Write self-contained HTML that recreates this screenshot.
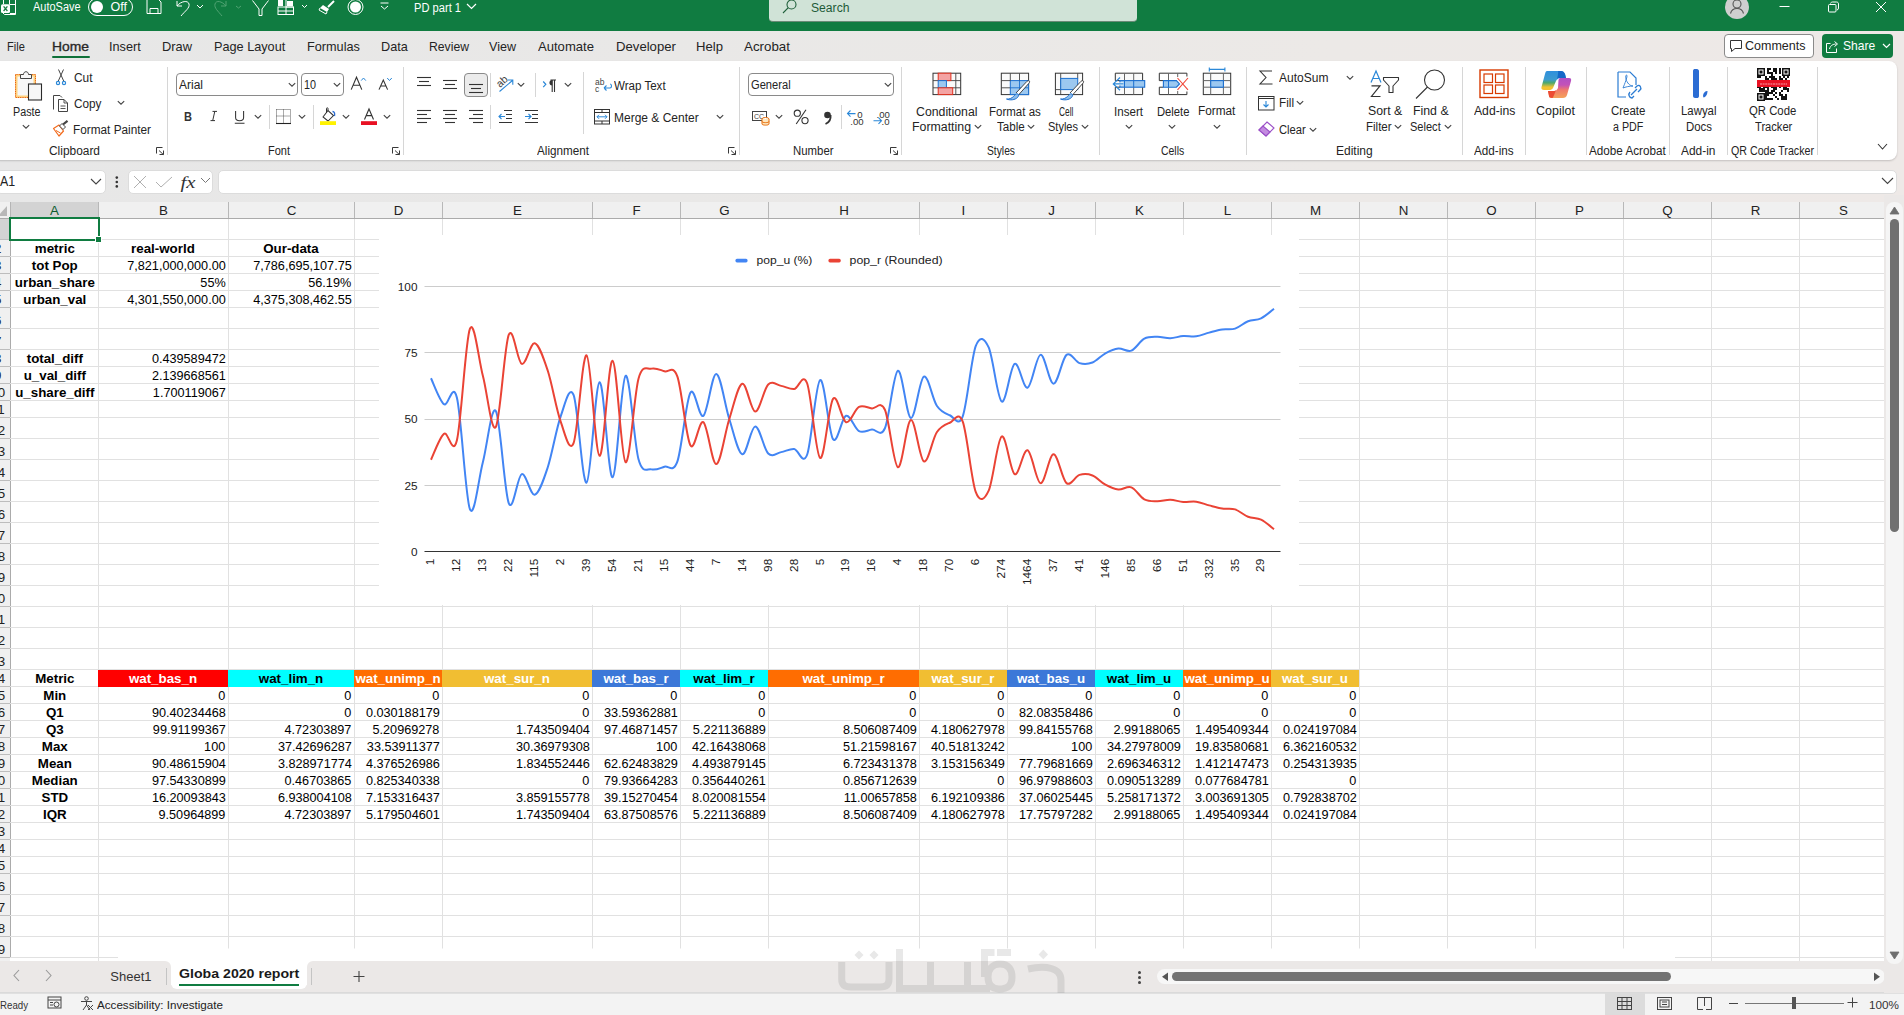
<!DOCTYPE html>
<html><head><meta charset="utf-8"><title>Excel</title>
<style>
*{box-sizing:border-box;margin:0;padding:0}
html,body{width:1904px;height:1015px;overflow:hidden;background:#fff;font-family:"Liberation Sans", sans-serif;color:#000}
.a{position:absolute;white-space:nowrap}
.rt{font-size:12px;color:#242424}
.c{position:absolute;font-size:13.33px;line-height:15px;white-space:nowrap;overflow:visible}
.b{font-weight:bold}
.ctr{text-align:center}
.rgt{text-align:right}
svg{position:absolute;overflow:visible}
</style></head><body>
<div class="a" style="left:0;top:31px;width:1904px;height:171px;background:linear-gradient(90deg,#E7E7E7 0%,#E9E8E7 35%,#ECE9E7 70%,#EEE9E7 100%)"></div>
<div class="a" style="left:7.4px;top:39.6px;font-size:12.7px;line-height:15px;color:#242424;transform:scaleX(0.8698);transform-origin:0 0;">File</div>
<div class="a" style="left:52.0px;top:39.6px;font-size:12.7px;line-height:15px;color:#222;transform:scaleX(1.0922);transform-origin:0 0;-webkit-text-stroke:0.35px #333;">Home</div>
<div class="a" style="left:109.0px;top:39.6px;font-size:12.7px;line-height:15px;color:#242424;">Insert</div>
<div class="a" style="left:162.0px;top:39.6px;font-size:12.7px;line-height:15px;color:#242424;transform:scaleX(1.0123);transform-origin:0 0;">Draw</div>
<div class="a" style="left:214.0px;top:39.6px;font-size:12.7px;line-height:15px;color:#242424;">Page Layout</div>
<div class="a" style="left:307.0px;top:39.6px;font-size:12.7px;line-height:15px;color:#242424;">Formulas</div>
<div class="a" style="left:381.0px;top:39.6px;font-size:12.7px;line-height:15px;color:#242424;">Data</div>
<div class="a" style="left:429.0px;top:39.6px;font-size:12.7px;line-height:15px;color:#242424;transform:scaleX(0.9606);transform-origin:0 0;">Review</div>
<div class="a" style="left:489.0px;top:39.6px;font-size:12.7px;line-height:15px;color:#242424;transform:scaleX(0.9891);transform-origin:0 0;">View</div>
<div class="a" style="left:538.0px;top:39.6px;font-size:12.7px;line-height:15px;color:#242424;transform:scaleX(1.0302);transform-origin:0 0;">Automate</div>
<div class="a" style="left:616.0px;top:39.6px;font-size:12.7px;line-height:15px;color:#242424;transform:scaleX(1.0365);transform-origin:0 0;">Developer</div>
<div class="a" style="left:696.0px;top:39.6px;font-size:12.7px;line-height:15px;color:#242424;transform:scaleX(1.0337);transform-origin:0 0;">Help</div>
<div class="a" style="left:744.0px;top:39.6px;font-size:12.7px;line-height:15px;color:#242424;transform:scaleX(1.0510);transform-origin:0 0;">Acrobat</div>
<div class="a" style="left:52px;top:56px;width:38px;height:2px;background:#0F7139;border-radius:1px"></div>
<div class="a" style="left:1724px;top:34px;width:90px;height:24px;border:1px solid #8a8a8a;border-radius:4px;background:#fff"></div>
<svg style="left:1730px;top:40px" width="12" height="13" viewBox="0 0 12 13"><path d="M0.5 0.5H11.5V8.5H5L1.5 11.5V8.5H0.5Z" fill="none" stroke="#333"/></svg>
<div class="a" style="left:1745.4px;top:39.4px;font-size:12.7px;line-height:15px;color:#242424;transform:scaleX(0.9870);transform-origin:0 0;">Comments</div>
<div class="a" style="left:1822px;top:34px;width:71px;height:24px;background:#107C41;border-radius:4px"></div>
<svg style="left:1826px;top:40px" width="13" height="13" viewBox="0 0 13 13"><path d="M4.5 3.5H0.5V12.5H10.5V8.5" fill="none" stroke="#fff"/><path d="M3.5 9C4.5 5 7.5 4 10.5 4M8.5 1.5L11.5 4L8.5 6.5" fill="none" stroke="#fff"/></svg>
<div class="a" style="left:1842.8px;top:39.4px;font-size:12.7px;line-height:15px;color:#fff;transform:scaleX(0.9501);transform-origin:0 0;">Share</div>
<svg style="left:1882px;top:43px" width="9" height="6" viewBox="0 0 9 6"><path d="M1 1L4.5 4.5L8 1" fill="none" stroke="#fff" stroke-width="1.2"/></svg><div class="a" style="left:0;top:0;width:1904px;height:31px;background:#107C41"></div>
<svg style="left:0;top:0" width="18" height="17" viewBox="0 0 18 17"><path d="M3.5 -1V4M9.5 -1V4.5H15.5M15.5 -1V14.5H4.5L3 13" fill="none" stroke="#fff" stroke-width="1"/><path d="M10 13.5H15.5" stroke="#fff"/>
<rect x="1" y="4.2" width="9" height="8.8" rx="1.6" fill="#fff"/><path d="M3.6 6.3L7.4 11M7.4 6.3L3.6 11" stroke="#1D7F45" stroke-width="1.3"/></svg>
<div class="a" style="left:33.0px;top:0.4px;font-size:12.5px;line-height:15px;color:#fff;transform:scaleX(0.8781);transform-origin:0 0;">AutoSave</div>
<div class="a" style="left:88px;top:-2px;width:45px;height:18px;border:1px solid #fff;border-radius:9px"></div>
<div class="a" style="left:91px;top:1px;width:12px;height:12px;background:#fff;border-radius:6px"></div>
<div class="a" style="left:110.5px;top:0.4px;font-size:12.5px;line-height:15px;color:#fff;">Off</div>
<svg style="left:146px;top:0" width="16" height="15" viewBox="0 0 16 15"><path d="M1 -2V13.5H15V2L11 -2" fill="none" stroke="#fff"/><path d="M4 13.5V8.5H12V13.5" fill="none" stroke="#fff"/></svg>
<svg style="left:175px;top:0" width="40" height="18" viewBox="0 0 40 18"><path d="M2 1L2 6L7 6" fill="none" stroke="#fff"/><path d="M2 6C6 1 13 0 14 4C15 8 10 11 6 16" fill="none" stroke="#fff"/><path d="M22 5L25 8L28 5" fill="none" stroke="#fff"/></svg>
<svg style="left:214px;top:0" width="40" height="18" viewBox="0 0 40 18" opacity="0.45"><path d="M12 1L12 6L7 6" fill="none" stroke="#9fd3b0"/><path d="M12 6C8 1 2 0 1 4C0 8 4 11 8 16" fill="none" stroke="#9fd3b0"/><path d="M22 6L24.5 8L27 6" fill="none" stroke="#9fd3b0"/></svg>
<svg style="left:252px;top:0" width="18" height="18" viewBox="0 0 18 18"><path d="M0.5 0.5L7 9V15.5H10V9L16.5 0.5" fill="none" stroke="#fff"/></svg>
<svg style="left:277px;top:0" width="36" height="16" viewBox="0 0 36 16"><rect x="1" y="0" width="5" height="6" fill="#fff"/><rect x="1" y="7" width="15.5" height="7.5" fill="none" stroke="#fff"/><path d="M9 7V14.5M1 11H16.5M9 0V7H16.5" stroke="#fff" fill="none"/><rect x="10" y="1" width="6" height="5" fill="#fff"/><path d="M25 5L27.5 7.5L30 5" fill="none" stroke="#fff"/></svg>
<svg style="left:318px;top:0" width="18" height="16" viewBox="0 0 18 16"><path d="M2 8L9 12L11 9L5 5Z" fill="#fff"/><path d="M10 7L16 1" stroke="#fff" stroke-width="2"/><path d="M2 8L1 10L8 14L9 12" fill="none" stroke="#fff"/></svg>
<svg style="left:347px;top:0" width="18" height="18" viewBox="0 0 18 18"><circle cx="8.5" cy="7" r="7.5" fill="none" stroke="#fff"/><circle cx="8.5" cy="7" r="5.5" fill="#fff"/></svg>
<svg style="left:380px;top:0" width="10" height="12" viewBox="0 0 10 12"><path d="M0.5 3H8.5" stroke="#fff"/><path d="M1 6L4.5 9L8 6" fill="none" stroke="#fff"/></svg>
<div class="a" style="left:414.0px;top:0.6px;font-size:12.5px;line-height:15px;color:#fff;transform:scaleX(0.8901);transform-origin:0 0;">PD part 1</div>
<svg style="left:466px;top:0" width="12" height="12" viewBox="0 0 12 12"><path d="M1 4L5.5 8.5L10 4" fill="none" stroke="#fff" stroke-width="1.2"/></svg>
<div class="a" style="left:769px;top:-4px;width:368px;height:26px;background:#D0E3D7;border-radius:4px;border-bottom:1px solid #6a8a76"></div>
<svg style="left:782px;top:0" width="16" height="14" viewBox="0 0 16 14"><circle cx="9.5" cy="4.5" r="4.5" fill="none" stroke="#1f5f3a" stroke-width="1.1"/><path d="M6.3 7.7L1 13" stroke="#1f5f3a" stroke-width="1.1"/></svg>
<div class="a" style="left:811.0px;top:0.6px;font-size:12.5px;line-height:15px;color:#1E5B37;transform:scaleX(0.9721);transform-origin:0 0;">Search</div>
<svg style="left:1724px;top:-6px" width="26" height="26" viewBox="0 0 26 26"><circle cx="13" cy="13" r="12" fill="#CFCFCF"/><circle cx="13" cy="10" r="4" fill="none" stroke="#555" stroke-width="1.1"/><path d="M6.5 19.5C7.5 15.5 10 14.5 13 14.5C16 14.5 18.5 15.5 19.5 19.5" fill="none" stroke="#555" stroke-width="1.1"/></svg>
<svg style="left:1779px;top:0" width="12" height="12" viewBox="0 0 12 12"><path d="M0.5 6.5H10.5" stroke="#fff"/></svg>
<svg style="left:1827px;top:1px" width="14" height="14" viewBox="0 0 14 14"><rect x="1.5" y="3.5" width="7.5" height="7.5" rx="1" fill="none" stroke="#fff"/><path d="M3.5 2.5C3.8 1.5 4.5 1 5.5 1H9.5C10.8 1 11.5 1.7 11.5 3V7C11.5 8 11 8.8 10 9" fill="none" stroke="#fff"/></svg>
<svg style="left:1875px;top:1px" width="14" height="14" viewBox="0 0 14 14"><path d="M1 1L11 11M11 1L1 11" stroke="#fff" stroke-width="1"/></svg><div class="a" style="left:-8px;top:61px;width:1905px;height:99px;background:#fff;border-radius:8px;box-shadow:0 1px 2px rgba(0,0,0,0.18)"></div>
<svg style="left:14px;top:69px" width="30" height="32" viewBox="0 0 30 32" ><rect x="1.5" y="5.5" width="20" height="23" fill="#FFD27F" stroke="#E8650A" stroke-width="1" stroke-dasharray="1.2 0.6"/><rect x="3.5" y="7.5" width="16" height="19" fill="#F7F7F7"/>
<path d="M6.5 9.5V5.5H9.5C9.5 1.8 14.5 1.8 14.5 5.5H17.5V9.5Z" fill="#F7F7F7" stroke="#444" stroke-width="1"/>
<rect x="14.5" y="15" width="13" height="16" fill="#F7F7F7" stroke="#2a2a2a" stroke-width="1.1"/></svg>
<div class="a" style="left:12.5px;top:104.6px;font-size:12.5px;line-height:15px;color:#242424;transform:scaleX(0.8603);transform-origin:0 0;">Paste</div>
<svg style="left:21.5px;top:124px" width="8" height="6" viewBox="0 0 8 6" ><path d="M0.8 1.2L4 4.2L7.2 1.2" fill="none" stroke="#424242" stroke-width="1.1"/></svg>
<svg style="left:55px;top:68px" width="14" height="18" viewBox="0 0 14 18" ><path d="M3.5 1.5L8.7 13M8.5 1.5L3.3 13" stroke="#444" stroke-width="1"/><circle cx="3" cy="15" r="1.6" fill="#fff" stroke="#2B88D8" stroke-width="1.2"/><circle cx="9" cy="15" r="1.6" fill="#fff" stroke="#2B88D8" stroke-width="1.2"/></svg>
<div class="a" style="left:73.5px;top:70.6px;font-size:12.5px;line-height:15px;color:#242424;transform:scaleX(0.9511);transform-origin:0 0;">Cut</div>
<svg style="left:53px;top:95px" width="16" height="17" viewBox="0 0 16 17" ><path d="M0.5 14.5V0.5H7L9 2.5" fill="none" stroke="#444"/><path d="M5.5 4.5H11L14.5 8V16.5H5.5Z" fill="#fff" stroke="#444"/><path d="M11 4.5V8H14.5M7.5 11H12.5M7.5 13.5H12.5" fill="none" stroke="#444" stroke-width="0.9"/></svg>
<div class="a" style="left:73.5px;top:97.1px;font-size:12.5px;line-height:15px;color:#242424;transform:scaleX(0.9424);transform-origin:0 0;">Copy</div>
<svg style="left:117px;top:100px" width="8" height="6" viewBox="0 0 8 6" ><path d="M0.8 1.2L4 4.2L7.2 1.2" fill="none" stroke="#424242" stroke-width="1.1"/></svg>
<svg style="left:52px;top:120px" width="17" height="17" viewBox="0 0 17 17" ><path d="M1.5 8.5L7 5L11.5 11L7 16Z" fill="#fff" stroke="#F26B1D" stroke-width="1.2" stroke-linejoin="round"/><path d="M4 10.5L8.5 13" stroke="#F26B1D" stroke-width="1"/><path d="M7.5 6L10 3.5L13.5 7L11 9.5Z" fill="#fff" stroke="#444" stroke-width="1"/><path d="M11 4.5L15.5 0.8" stroke="#444" stroke-width="2.2"/></svg>
<div class="a" style="left:73.0px;top:122.6px;font-size:12.5px;line-height:15px;color:#242424;transform:scaleX(0.9435);transform-origin:0 0;">Format Painter</div>
<div class="a" style="left:49.0px;top:144.1px;font-size:12.5px;line-height:15px;color:#242424;transform:scaleX(0.9532);transform-origin:0 0;">Clipboard</div>
<svg style="left:156px;top:147px" width="9" height="9" viewBox="0 0 9 9" ><path d="M0.5 6.5V0.5H6.5" fill="none" stroke="#222" stroke-width="0.9"/><path d="M3 3.5L7.3 7.5M7.5 3.5V7.5H3.5" fill="none" stroke="#222" stroke-width="0.9"/></svg>
<div class="a" style="left:167px;top:67px;width:1px;height:88px;background:#D6D6D6"></div>
<div class="a" style="left:176px;top:73px;width:122px;height:23px;border:1px solid #8A8A8A;border-radius:4px;background:#fff"></div>
<div class="a" style="left:179.0px;top:78.1px;font-size:12.5px;line-height:15px;color:#242424;transform:scaleX(0.9598);transform-origin:0 0;">Arial</div>
<svg style="left:287.5px;top:82px" width="8" height="6" viewBox="0 0 8 6" ><path d="M0.8 1.2L4 4.2L7.2 1.2" fill="none" stroke="#424242" stroke-width="1.1"/></svg>
<div class="a" style="left:301px;top:73px;width:43px;height:23px;border:1px solid #8A8A8A;border-radius:4px;background:#fff"></div>
<div class="a" style="left:304.0px;top:78.1px;font-size:12.5px;line-height:15px;color:#242424;transform:scaleX(0.8631);transform-origin:0 0;">10</div>
<svg style="left:333px;top:82px" width="8" height="6" viewBox="0 0 8 6" ><path d="M0.8 1.2L4 4.2L7.2 1.2" fill="none" stroke="#424242" stroke-width="1.1"/></svg>
<svg style="left:0px;top:0px" width="1" height="1" viewBox="0 0 1 1" ></svg>
<svg style="left:345px;top:70px" width="60" height="25" viewBox="0 0 60 25" ><path d="M6.2 19.6L11.5 7.2L16.8 19.6M8.2 15.2H14.8" fill="none" stroke="#333" stroke-width="1.1"/><path d="M16.2 10.6L18.5 8L20.8 10.6" fill="none" stroke="#2B88D8" stroke-width="1"/><path d="M34 19.6L38.3 10L42.6 19.6M35.6 16H41" fill="none" stroke="#333" stroke-width="1.1"/><path d="M42.2 8L44.5 10.5L46.8 8" fill="none" stroke="#2B88D8" stroke-width="1"/></svg>
<svg style="left:180px;top:106px" width="70" height="20" viewBox="0 0 70 20" ><text x="4" y="14.6" font-family="Liberation Sans" font-weight="bold" font-size="12.8" fill="#333" textLength="8" lengthAdjust="spacingAndGlyphs">B</text><path d="M32.5 5.4H37M30.5 14.6H35M34.8 5.4L32.7 14.6" fill="none" stroke="#333" stroke-width="1"/><path d="M55.6 5V11.5C55.6 13.6 57 14.8 59.6 14.8C62.2 14.8 63.6 13.6 63.6 11.5V5M54.8 17.2H64.5" fill="none" stroke="#333" stroke-width="1.05"/></svg>
<svg style="left:254px;top:114px" width="8" height="6" viewBox="0 0 8 6" ><path d="M0.8 1.2L4 4.2L7.2 1.2" fill="none" stroke="#424242" stroke-width="1.1"/></svg>
<div class="a" style="left:269px;top:105px;width:1px;height:24px;background:#D6D6D6"></div>
<svg style="left:275px;top:108px" width="18" height="17" viewBox="0 0 18 17" ><path d="M1.5 1.5H15.5M1.5 1.5V14.5M15.5 1.5V14.5M8.5 1.5V14.5M1.5 8H15.5" fill="none" stroke="#444" stroke-width="0.9" stroke-dasharray="1 1"/><path d="M1 15.5H16" stroke="#222" stroke-width="1.1"/></svg>
<svg style="left:298px;top:114px" width="8" height="6" viewBox="0 0 8 6" ><path d="M0.8 1.2L4 4.2L7.2 1.2" fill="none" stroke="#424242" stroke-width="1.1"/></svg>
<div class="a" style="left:313px;top:105px;width:1px;height:24px;background:#D6D6D6"></div>
<svg style="left:319px;top:107px" width="19" height="19" viewBox="0 0 19 19" ><path d="M4 10L9 3.5L14.5 8.5L9 14Z" fill="none" stroke="#333" stroke-width="1.05"/><path d="M9 3.5V1.5C9 0.5 7.5 0.5 7.5 1.5V6" fill="none" stroke="#333" stroke-width="1"/><path d="M13.5 4.5C15.5 4.5 16 6.5 15.5 9" fill="none" stroke="#2B6CD3" stroke-width="1.3"/><rect x="1" y="14.2" width="16" height="3.8" fill="#FFF200"/></svg>
<svg style="left:342px;top:114px" width="8" height="6" viewBox="0 0 8 6" ><path d="M0.8 1.2L4 4.2L7.2 1.2" fill="none" stroke="#424242" stroke-width="1.1"/></svg>
<svg style="left:360px;top:107px" width="19" height="19" viewBox="0 0 19 19" ><path d="M4.5 12.5L9 2L13.5 12.5M6.2 8.6H11.8" fill="none" stroke="#333" stroke-width="1.1"/><rect x="1" y="14.2" width="16" height="3.8" fill="#E81123"/></svg>
<svg style="left:383px;top:114px" width="8" height="6" viewBox="0 0 8 6" ><path d="M0.8 1.2L4 4.2L7.2 1.2" fill="none" stroke="#424242" stroke-width="1.1"/></svg>
<div class="a" style="left:268.0px;top:144.1px;font-size:12.5px;line-height:15px;color:#242424;transform:scaleX(0.8796);transform-origin:0 0;">Font</div>
<svg style="left:392px;top:147px" width="9" height="9" viewBox="0 0 9 9" ><path d="M0.5 6.5V0.5H6.5" fill="none" stroke="#222" stroke-width="0.9"/><path d="M3 3.5L7.3 7.5M7.5 3.5V7.5H3.5" fill="none" stroke="#222" stroke-width="0.9"/></svg>
<div class="a" style="left:403px;top:67px;width:1px;height:88px;background:#D6D6D6"></div>
<svg style="left:417px;top:77px" width="14" height="10" viewBox="0 0 14 10" ><path d="M0.0 0.5H14.0" stroke="#333" stroke-width="1.1"/><path d="M2.0 4.5H12.0" stroke="#333" stroke-width="1.1"/><path d="M0.0 8.5H14.0" stroke="#333" stroke-width="1.1"/></svg>
<svg style="left:443px;top:80px" width="14" height="10" viewBox="0 0 14 10" ><path d="M0.0 0.5H14.0" stroke="#333" stroke-width="1.1"/><path d="M2.0 4.5H12.0" stroke="#333" stroke-width="1.1"/><path d="M0.0 8.5H14.0" stroke="#333" stroke-width="1.1"/></svg>
<div class="a" style="left:464px;top:73px;width:24px;height:24px;border:1px solid #8A8A8A;border-radius:4px;background:#EBEBEB"></div>
<svg style="left:469px;top:84px" width="14" height="10" viewBox="0 0 14 10" ><path d="M0.0 0.5H14.0" stroke="#333" stroke-width="1.1"/><path d="M2.0 4.5H12.0" stroke="#333" stroke-width="1.1"/><path d="M0.0 8.5H14.0" stroke="#333" stroke-width="1.1"/></svg>
<div class="a" style="left:490px;top:73px;width:1px;height:24px;background:#D6D6D6"></div>
<svg style="left:496px;top:75px" width="19" height="19" viewBox="0 0 19 19" ><text x="0.5" y="10" font-family="Liberation Sans" font-size="10.5" fill="#444" transform="rotate(-42 6 7)">ab</text><path d="M3.5 16.5L16.5 5.5M12 5H16.8V9.8" fill="none" stroke="#2B88D8" stroke-width="1.1"/></svg>
<svg style="left:517px;top:82px" width="8" height="6" viewBox="0 0 8 6" ><path d="M0.8 1.2L4 4.2L7.2 1.2" fill="none" stroke="#424242" stroke-width="1.1"/></svg>
<div class="a" style="left:535px;top:73px;width:1px;height:24px;background:#D6D6D6"></div>
<svg style="left:542px;top:79px" width="16" height="14" viewBox="0 0 16 14" ><path d="M1.2 2.5L3.8 5.3L1.2 8.1" fill="none" stroke="#2B88D8" stroke-width="1.2"/><path d="M8.5 1H14M10.2 1V13M12.5 1V13" stroke="#333" stroke-width="1.1"/><path d="M10.2 1C6.5 1 6.5 6.5 10.2 6.5Z" fill="#333"/></svg>
<svg style="left:564px;top:82px" width="8" height="6" viewBox="0 0 8 6" ><path d="M0.8 1.2L4 4.2L7.2 1.2" fill="none" stroke="#424242" stroke-width="1.1"/></svg>
<svg style="left:417px;top:110px" width="14" height="14" viewBox="0 0 14 14" ><path d="M0 0.5H14" stroke="#333" stroke-width="1.1"/><path d="M0 4.5H10" stroke="#333" stroke-width="1.1"/><path d="M0 8.5H14" stroke="#333" stroke-width="1.1"/><path d="M0 12.5H10" stroke="#333" stroke-width="1.1"/></svg>
<svg style="left:443px;top:110px" width="14" height="14" viewBox="0 0 14 14" ><path d="M0.0 0.5H14.0" stroke="#333" stroke-width="1.1"/><path d="M2.0 4.5H12.0" stroke="#333" stroke-width="1.1"/><path d="M0.0 8.5H14.0" stroke="#333" stroke-width="1.1"/><path d="M2.0 12.5H12.0" stroke="#333" stroke-width="1.1"/></svg>
<svg style="left:469px;top:110px" width="14" height="14" viewBox="0 0 14 14" ><path d="M0 0.5H14" stroke="#333" stroke-width="1.1"/><path d="M4 4.5H14" stroke="#333" stroke-width="1.1"/><path d="M0 8.5H14" stroke="#333" stroke-width="1.1"/><path d="M4 12.5H14" stroke="#333" stroke-width="1.1"/></svg>
<div class="a" style="left:490px;top:105px;width:1px;height:24px;background:#D6D6D6"></div>
<svg style="left:498px;top:110px" width="15" height="14" viewBox="0 0 15 14" ><path d="M6 0.5H14M8 4.5H14M8 8.5H14M1 12.5H14" stroke="#333" stroke-width="1.1"/><path d="M1 6.5H7M3.5 4L1 6.5L3.5 9" fill="none" stroke="#2B88D8" stroke-width="1.1"/></svg>
<svg style="left:524px;top:110px" width="15" height="14" viewBox="0 0 15 14" ><path d="M1 0.5H14M8 4.5H14M8 8.5H14M1 12.5H14" stroke="#333" stroke-width="1.1"/><path d="M1 6.5H7M4.5 4L7 6.5L4.5 9" fill="none" stroke="#2B88D8" stroke-width="1.1"/></svg>
<div class="a" style="left:583px;top:72px;width:1px;height:62px;background:#D6D6D6"></div>
<svg style="left:595px;top:77px" width="17" height="17" viewBox="0 0 17 17" ><text x="0" y="7.5" font-family="Liberation Sans" font-size="8.5" fill="#444">ab</text><text x="0" y="15" font-family="Liberation Sans" font-size="8.5" fill="#444">c</text><path d="M9 11L15 11C17 11 17 7 15 7M9 11L11.5 8.5M9 11L11.5 13.5" fill="none" stroke="#2B88D8" stroke-width="1.1"/></svg>
<div class="a" style="left:614.0px;top:78.8px;font-size:12.5px;line-height:15px;color:#242424;transform:scaleX(0.9246);transform-origin:0 0;">Wrap Text</div>
<svg style="left:594px;top:109px" width="16" height="16" viewBox="0 0 16 16" ><rect x="0.5" y="0.5" width="15" height="14.5" fill="none" stroke="#333"/><path d="M0.5 3.5H15.5M0.5 12H15.5M8 0.5V3.5M8 12V15" stroke="#333"/><path d="M3 7.8H13M5 5.8L3 7.8L5 9.8M11 5.8L13 7.8L11 9.8" fill="none" stroke="#2B88D8" stroke-width="1"/></svg>
<div class="a" style="left:614.0px;top:111.1px;font-size:12.5px;line-height:15px;color:#242424;transform:scaleX(0.9600);transform-origin:0 0;">Merge &amp; Center</div>
<svg style="left:715.5px;top:114px" width="8" height="6" viewBox="0 0 8 6" ><path d="M0.8 1.2L4 4.2L7.2 1.2" fill="none" stroke="#424242" stroke-width="1.1"/></svg>
<div class="a" style="left:537.0px;top:144.1px;font-size:12.5px;line-height:15px;color:#242424;transform:scaleX(0.9355);transform-origin:0 0;">Alignment</div>
<svg style="left:728px;top:147px" width="9" height="9" viewBox="0 0 9 9" ><path d="M0.5 6.5V0.5H6.5" fill="none" stroke="#222" stroke-width="0.9"/><path d="M3 3.5L7.3 7.5M7.5 3.5V7.5H3.5" fill="none" stroke="#222" stroke-width="0.9"/></svg>
<div class="a" style="left:739px;top:67px;width:1px;height:88px;background:#D6D6D6"></div>
<div class="a" style="left:748px;top:73px;width:146px;height:23px;border:1px solid #8A8A8A;border-radius:4px;background:#fff"></div>
<div class="a" style="left:751.0px;top:78.1px;font-size:12.5px;line-height:15px;color:#242424;transform:scaleX(0.8905);transform-origin:0 0;">General</div>
<svg style="left:883.5px;top:82px" width="8" height="6" viewBox="0 0 8 6" ><path d="M0.8 1.2L4 4.2L7.2 1.2" fill="none" stroke="#424242" stroke-width="1.1"/></svg>
<svg style="left:752px;top:111px" width="18" height="15" viewBox="0 0 18 15" ><rect x="0.5" y="0.5" width="14" height="9" fill="none" stroke="#444"/><text x="2" y="8" font-family="Liberation Sans" font-size="7" fill="#444">CC</text><ellipse cx="13.5" cy="8" rx="3.5" ry="1.5" fill="#fff" stroke="#E8700F"/><path d="M10 8V13C10 14.5 17 14.5 17 13V8" fill="#FDE7C0" stroke="#E8700F"/><path d="M10 10.5C10 12 17 12 17 10.5" fill="none" stroke="#E8700F"/></svg>
<svg style="left:774.5px;top:114px" width="8" height="6" viewBox="0 0 8 6" ><path d="M0.8 1.2L4 4.2L7.2 1.2" fill="none" stroke="#424242" stroke-width="1.1"/></svg>
<svg style="left:792px;top:108px" width="18" height="18" viewBox="0 0 18 18" ><circle cx="5.3" cy="5.2" r="3.1" fill="none" stroke="#333" stroke-width="1.1"/><circle cx="13" cy="12.6" r="3.1" fill="none" stroke="#333" stroke-width="1.1"/><path d="M14 1.8L4.2 16" stroke="#333" stroke-width="1.1"/></svg>
<svg style="left:822px;top:109px" width="12" height="17" viewBox="0 0 12 17" ><circle cx="5.5" cy="6" r="3.3" fill="#333"/><path d="M8.6 6C9 10 7 13.5 3.5 15" fill="none" stroke="#333" stroke-width="1.8"/></svg>
<div class="a" style="left:841px;top:105px;width:1px;height:24px;background:#D6D6D6"></div>
<svg style="left:846px;top:109px" width="20" height="17" viewBox="0 0 20 17" ><path d="M1.5 4.6H9.5M4.5 1.5L1.5 4.6L4.5 7.7" fill="none" stroke="#2B88D8" stroke-width="1.1"/><text x="11.2" y="8.6" font-family="Liberation Sans" font-size="9.6" fill="#333">0</text><text x="4.3" y="15.6" font-family="Liberation Sans" font-size="9.6" fill="#333">.00</text></svg>
<svg style="left:872px;top:109px" width="20" height="17" viewBox="0 0 20 17" ><text x="4.5" y="8.6" font-family="Liberation Sans" font-size="9.6" fill="#333">.00</text><path d="M1.5 11.8H9.5M6.5 8.7L9.5 11.8L6.5 14.9" fill="none" stroke="#2B88D8" stroke-width="1.1"/><text x="9.6" y="15.6" font-family="Liberation Sans" font-size="9.6" fill="#333">.0</text></svg>
<div class="a" style="left:792.5px;top:144.1px;font-size:12.5px;line-height:15px;color:#242424;transform:scaleX(0.9110);transform-origin:0 0;">Number</div>
<svg style="left:890px;top:147px" width="9" height="9" viewBox="0 0 9 9" ><path d="M0.5 6.5V0.5H6.5" fill="none" stroke="#222" stroke-width="0.9"/><path d="M3 3.5L7.3 7.5M7.5 3.5V7.5H3.5" fill="none" stroke="#222" stroke-width="0.9"/></svg>
<div class="a" style="left:901px;top:67px;width:1px;height:88px;background:#D6D6D6"></div>
<svg style="left:932px;top:72px" width="30" height="24" viewBox="0 0 30 24" ><rect x="1" y="1.2" width="27.7" height="21.4" fill="#FAFAFA" stroke="#333" stroke-width="1"/>
<path d="M1 8.6H28.7M1 15.8H28.7M23.8 1.2V22.6" stroke="#444" stroke-width="0.9" fill="none"/>
<rect x="6.2" y="1.2" width="12.7" height="7.4" fill="#F4A3A3" stroke="#E0301E" stroke-width="1"/>
<rect x="6.2" y="8.6" width="8.2" height="7.2" fill="#9CC8F0" stroke="#1B6FD0" stroke-width="1"/>
<rect x="6.2" y="15.8" width="14.5" height="6.8" fill="#F4A3A3" stroke="#E0301E" stroke-width="1"/></svg>
<div class="a" style="left:916.0px;top:104.5px;font-size:12.5px;line-height:15px;color:#242424;transform:scaleX(0.9833);transform-origin:0 0;">Conditional</div>
<div class="a" style="left:912.0px;top:120.1px;font-size:12.5px;line-height:15px;color:#242424;transform:scaleX(0.9876);transform-origin:0 0;">Formatting</div>
<svg style="left:973.5px;top:124px" width="8" height="6" viewBox="0 0 8 6" ><path d="M0.8 1.2L4 4.2L7.2 1.2" fill="none" stroke="#424242" stroke-width="1.1"/></svg>
<svg style="left:1000px;top:72px" width="32" height="30" viewBox="0 0 32 30" ><rect x="1.3" y="1.2" width="27.3" height="21.4" fill="#FAFAFA" stroke="#333" stroke-width="1"/>
<rect x="10.3" y="8.6" width="18.3" height="14" fill="#9CC8F0" stroke="#1B6FD0" stroke-width="1"/>
<path d="M1.3 8.6H10.3M1.3 15.8H10.3M10.3 1.2V8.6M19.5 1.2V8.6" stroke="#444" stroke-width="0.9" fill="none"/><path d="M10.3 15.8H28.6M19.5 8.6V22.6" stroke="#1B6FD0" stroke-width="0.9"/>
<path d="M16 21L27 9.3C28 8.3 29.5 8.6 29.6 9.6C29.7 10.3 29.3 10.8 28.6 11.6L18.5 23" fill="#fff" stroke="#333" stroke-width="0.9"/><path d="M6.5 27C9 27.5 12 26 13.5 24.5C15 23 16 21.5 17.3 21.8C18.8 22 19 24 17.5 25.5C15 28 10 28.5 6.5 27Z" fill="#8CBDEB" stroke="#1B6FD0" stroke-width="1"/></svg>
<div class="a" style="left:989.0px;top:104.5px;font-size:12.5px;line-height:15px;color:#242424;transform:scaleX(0.9207);transform-origin:0 0;">Format as</div>
<div class="a" style="left:996.7px;top:120.1px;font-size:12.5px;line-height:15px;color:#242424;transform:scaleX(0.9303);transform-origin:0 0;">Table</div>
<svg style="left:1027px;top:124px" width="8" height="6" viewBox="0 0 8 6" ><path d="M0.8 1.2L4 4.2L7.2 1.2" fill="none" stroke="#424242" stroke-width="1.1"/></svg>
<svg style="left:1054px;top:72px" width="32" height="30" viewBox="0 0 32 30" ><rect x="1.4" y="1.2" width="27.2" height="21.4" fill="#FAFAFA" stroke="#333" stroke-width="1"/>
<path d="M6.7 1.2V22.6M1.4 17.6H6.7M23.7 1.2V6.4" stroke="#444" stroke-width="0.9" fill="none"/>
<rect x="6.7" y="6.4" width="17" height="11.2" fill="#9CC8F0" stroke="#1B6FD0" stroke-width="1"/>
<path d="M16 21L27 9.3C28 8.3 29.5 8.6 29.6 9.6C29.7 10.3 29.3 10.8 28.6 11.6L18.5 23" fill="#fff" stroke="#333" stroke-width="0.9"/><path d="M6.5 27C9 27.5 12 26 13.5 24.5C15 23 16 21.5 17.3 21.8C18.8 22 19 24 17.5 25.5C15 28 10 28.5 6.5 27Z" fill="#8CBDEB" stroke="#1B6FD0" stroke-width="1"/></svg>
<div class="a" style="left:1059.0px;top:104.5px;font-size:12.5px;line-height:15px;color:#242424;transform:scaleX(0.6687);transform-origin:0 0;">Cell</div>
<div class="a" style="left:1048.0px;top:120.1px;font-size:12.5px;line-height:15px;color:#242424;transform:scaleX(0.8813);transform-origin:0 0;">Styles</div>
<svg style="left:1081px;top:124px" width="8" height="6" viewBox="0 0 8 6" ><path d="M0.8 1.2L4 4.2L7.2 1.2" fill="none" stroke="#424242" stroke-width="1.1"/></svg>
<div class="a" style="left:986.5px;top:144.1px;font-size:12.5px;line-height:15px;color:#242424;transform:scaleX(0.8226);transform-origin:0 0;">Styles</div>
<div class="a" style="left:1099px;top:67px;width:1px;height:88px;background:#D6D6D6"></div>
<svg style="left:1100px;top:60px" width="140" height="40" viewBox="0 0 140 40" ><g fill="none" stroke-width="1">
<path d="M15.3 20.6V13.2H42.6V34.6H15.3V27.2" fill="#FAFAFA" stroke="#333"/><path d="M15.3 20.6H20M15.3 27.2H20" stroke="#333"/><path d="M24.5 13.2V34.6M33.7 13.2V34.6" stroke="#666"/>
<rect x="19.9" y="20.6" width="24.8" height="6.6" fill="#9CC8F0" stroke="#1B6FD0" stroke-width="1.1"/><path d="M33.7 20.6V27.2M24.5 20.6V27.2" stroke="#1B6FD0"/>
<path d="M13.5 23.9H23.5" stroke="#fff" stroke-width="3"/><path d="M13.3 23.9H23.5M20 17.5L13.3 23.9L20 30.3" stroke="#2B88D8" stroke-width="1.2"/>
<path d="M59.3 20.6V13.2H86.9V16.5M86.9 31.5V34.6H59.3V27.2" fill="none" stroke="#333"/><path d="M59.3 20.6H63.4M59.3 27.2H63.4" stroke="#333"/><path d="M68.5 13.2V20.6M77.7 13.2V17M68.5 27.2V34.6M77.7 31V34.6" stroke="#666"/>
<path d="M63.4 20.6H76.4L79.5 23.9L76.4 27.2H63.4Z" fill="#9CC8F0" stroke="#1B6FD0" stroke-width="1.1"/><path d="M68.5 20.6V27.2" stroke="#1B6FD0"/>
<path d="M77.5 18L88 29.8M88 18L77.5 29.8" stroke="#F0483A" stroke-width="1.1"/>
<path d="M109.3 9.4H124.9M109.3 7.4V11.4M124.9 7.4V11.4" stroke="#2B88D8" stroke-width="1.1"/>
<rect x="103.3" y="13.2" width="27.4" height="21.4" fill="#FAFAFA" stroke="#333"/><path d="M110.7 13.2V34.6M123.4 13.2V34.6M103.3 20.6H130.7M103.3 27.2H130.7" stroke="#666"/>
<rect x="110.7" y="20.6" width="12.7" height="6.6" fill="#9CC8F0" stroke="#1B6FD0" stroke-width="1.1"/>
</g></svg>
<div class="a" style="left:1114.0px;top:105.1px;font-size:12.5px;line-height:15px;color:#242424;transform:scaleX(0.9276);transform-origin:0 0;">Insert</div>
<svg style="left:1124.5px;top:124.4px" width="8" height="6" viewBox="0 0 8 6" ><path d="M0.8 1.2L4 4.2L7.2 1.2" fill="none" stroke="#424242" stroke-width="1.1"/></svg>
<div class="a" style="left:1156.5px;top:105.1px;font-size:12.5px;line-height:15px;color:#242424;transform:scaleX(0.8995);transform-origin:0 0;">Delete</div>
<svg style="left:1168.4px;top:124.4px" width="8" height="6" viewBox="0 0 8 6" ><path d="M0.8 1.2L4 4.2L7.2 1.2" fill="none" stroke="#424242" stroke-width="1.1"/></svg>
<div class="a" style="left:1198.4px;top:104.1px;font-size:12.5px;line-height:15px;color:#242424;transform:scaleX(0.9447);transform-origin:0 0;">Format</div>
<svg style="left:1212.5px;top:124.4px" width="8" height="6" viewBox="0 0 8 6" ><path d="M0.8 1.2L4 4.2L7.2 1.2" fill="none" stroke="#424242" stroke-width="1.1"/></svg>
<div class="a" style="left:1161.4px;top:144.1px;font-size:12.5px;line-height:15px;color:#242424;transform:scaleX(0.8350);transform-origin:0 0;">Cells</div>
<div class="a" style="left:1246px;top:67px;width:1px;height:88px;background:#D6D6D6"></div>
<svg style="left:1259px;top:70px" width="15" height="15" viewBox="0 0 15 15" ><path d="M13 1H1L7 7.5L1 14H13.5" fill="none" stroke="#333" stroke-width="1.1"/></svg>
<div class="a" style="left:1279.0px;top:71.1px;font-size:12.5px;line-height:15px;color:#242424;transform:scaleX(0.9608);transform-origin:0 0;">AutoSum</div>
<svg style="left:1345.5px;top:75px" width="8" height="6" viewBox="0 0 8 6" ><path d="M0.8 1.2L4 4.2L7.2 1.2" fill="none" stroke="#424242" stroke-width="1.1"/></svg>
<svg style="left:1258px;top:96px" width="18" height="15" viewBox="0 0 18 15" ><rect x="0.5" y="0.5" width="15.5" height="13.5" fill="none" stroke="#333"/><path d="M0.5 2.5H16" stroke="#333"/><path d="M8 5V11M5.5 8.5L8 11L10.5 8.5" fill="none" stroke="#2B88D8" stroke-width="1.1"/></svg>
<div class="a" style="left:1279.0px;top:96.4px;font-size:12.5px;line-height:15px;color:#242424;transform:scaleX(0.9394);transform-origin:0 0;">Fill</div>
<svg style="left:1296.4px;top:100.3px" width="8" height="6" viewBox="0 0 8 6" ><path d="M0.8 1.2L4 4.2L7.2 1.2" fill="none" stroke="#424242" stroke-width="1.1"/></svg>
<svg style="left:1258px;top:121px" width="17" height="17" viewBox="0 0 17 17" ><path d="M9 1L16 7L8 15L1 9Z" fill="#fff" stroke="#9A4FC7" stroke-width="1.1"/><path d="M1 9L5 5L12 11L8 15Z" fill="#C38BE0" stroke="#9A4FC7" stroke-width="1.1"/></svg>
<div class="a" style="left:1279.0px;top:123.1px;font-size:12.5px;line-height:15px;color:#242424;transform:scaleX(0.8972);transform-origin:0 0;">Clear</div>
<svg style="left:1308.6px;top:127px" width="8" height="6" viewBox="0 0 8 6" ><path d="M0.8 1.2L4 4.2L7.2 1.2" fill="none" stroke="#424242" stroke-width="1.1"/></svg>
<svg style="left:1365px;top:68px" width="40" height="32" viewBox="0 0 40 32" ><path d="M6 14.6L11 3L16 14.6M7.8 10.5H14.2" fill="none" stroke="#2B88D8" stroke-width="1.2"/><path d="M6.5 17.8H15L6.5 28.5H15.5" fill="none" stroke="#333" stroke-width="1.2"/><path d="M18.5 9.5H33.5V12L28 18V24.5H24V18L18.5 12Z" fill="none" stroke="#333" stroke-width="1.1" stroke-linejoin="round"/></svg>
<div class="a" style="left:1367.8px;top:104.3px;font-size:12.5px;line-height:15px;color:#242424;transform:scaleX(0.9846);transform-origin:0 0;">Sort &amp;</div>
<div class="a" style="left:1366.4px;top:120.1px;font-size:12.5px;line-height:15px;color:#242424;transform:scaleX(0.9216);transform-origin:0 0;">Filter</div>
<svg style="left:1394.3px;top:124px" width="8" height="6" viewBox="0 0 8 6" ><path d="M0.8 1.2L4 4.2L7.2 1.2" fill="none" stroke="#424242" stroke-width="1.1"/></svg>
<svg style="left:1415px;top:69px" width="31" height="31" viewBox="0 0 31 31" ><circle cx="19.5" cy="11" r="10" fill="none" stroke="#333" stroke-width="1.1"/><path d="M12.5 18L1 29.5" stroke="#333" stroke-width="1.1"/></svg>
<div class="a" style="left:1413.0px;top:104.3px;font-size:12.5px;line-height:15px;color:#242424;transform:scaleX(0.9854);transform-origin:0 0;">Find &amp;</div>
<div class="a" style="left:1410.0px;top:120.1px;font-size:12.5px;line-height:15px;color:#242424;transform:scaleX(0.8837);transform-origin:0 0;">Select</div>
<svg style="left:1443.6px;top:124px" width="8" height="6" viewBox="0 0 8 6" ><path d="M0.8 1.2L4 4.2L7.2 1.2" fill="none" stroke="#424242" stroke-width="1.1"/></svg>
<div class="a" style="left:1336.0px;top:144.1px;font-size:12.5px;line-height:15px;color:#242424;transform:scaleX(0.9602);transform-origin:0 0;">Editing</div>
<div class="a" style="left:1462px;top:67px;width:1px;height:88px;background:#D6D6D6"></div>
<svg style="left:1479px;top:69px" width="31" height="30" viewBox="0 0 31 30" ><rect x="1" y="1" width="28" height="27.5" fill="none" stroke="#D83B01" stroke-width="1.4"/><rect x="5" y="5" width="8.5" height="8.5" fill="none" stroke="#D83B01" stroke-width="1.2"/><rect x="16.5" y="5" width="8.5" height="8.5" fill="none" stroke="#D83B01" stroke-width="1.2"/><rect x="5" y="16" width="8.5" height="8.5" fill="none" stroke="#D83B01" stroke-width="1.2"/><rect x="16.5" y="16" width="8.5" height="8.5" fill="none" stroke="#D83B01" stroke-width="1.2"/></svg>
<div class="a" style="left:1473.5px;top:103.9px;font-size:12.5px;line-height:15px;color:#242424;transform:scaleX(0.9744);transform-origin:0 0;">Add-ins</div>
<div class="a" style="left:1474.0px;top:144.1px;font-size:12.5px;line-height:15px;color:#242424;transform:scaleX(0.9343);transform-origin:0 0;">Add-ins</div>
<div class="a" style="left:1525px;top:67px;width:1px;height:88px;background:#D6D6D6"></div>
<svg style="left:1540px;top:69px" width="33" height="30" viewBox="0 0 33 30" ><defs><linearGradient id="cg1" x1="0" y1="0" x2="0" y2="1"><stop offset="0" stop-color="#2F8FDD"/><stop offset="0.45" stop-color="#3C9BD0"/><stop offset="0.62" stop-color="#4CA86E"/><stop offset="0.85" stop-color="#F2C232"/><stop offset="1" stop-color="#F2C232"/></linearGradient>
<linearGradient id="cg2" x1="0" y1="0" x2="0" y2="1"><stop offset="0" stop-color="#B04FC4"/><stop offset="0.35" stop-color="#C352B8"/><stop offset="0.6" stop-color="#F07A6A"/><stop offset="1" stop-color="#F4A25A"/></linearGradient></defs>
<path d="M7 2H21C23 2 24 3 25 5L26 9H20C18 9 17 10 16 12L13 19C12 20.5 11 21 9 21H4C2 21 1 20 1.5 18L5 5C5.5 3 6 2 7 2Z" fill="url(#cg1)"/>
<path d="M18 2H21C23 2 24 3 25 5L26 9H20C18.5 9 17.5 9.5 17 11L18 5C18.5 3 18 2 18 2Z" fill="#1468C8"/>
<path d="M20 9H29C31 9 31.5 10 31 12L27 26C26.5 28 25 29 23 29H12C10 29 9 28 9 27L8 22H14C16 22 17 21 18 19L18.5 11C19 10 19 9 20 9Z" fill="url(#cg2)"/>
<path d="M8 22H14C15 22 15.5 21.8 16 21.3L13 28.5C12.5 29 12 29 12 29C10 29 9 28 9 27Z" fill="#EC4A32"/></svg>
<div class="a" style="left:1536.0px;top:103.9px;font-size:12.5px;line-height:15px;color:#242424;">Copilot</div>
<div class="a" style="left:1586px;top:67px;width:1px;height:88px;background:#D6D6D6"></div>
<svg style="left:1617px;top:71px" width="29" height="30" viewBox="0 0 29 30" ><path d="M1 1H13L19 7V14M1 1V26H9" fill="none" stroke="#2B7CD3" stroke-width="1.2"/><path d="M6 17C8 12 10 7 10 5C10 3 8 4 9 8C10 12 13 15 16 15C13 15 8 16 6 17Z" fill="none" stroke="#2B7CD3" stroke-width="0.9"/><path d="M14 24L20 18M13 21C11 23 12 27 15 27L17 25M21 21L23 19C25 17 23 13 20 15L18 17" fill="none" stroke="#2B7CD3" stroke-width="1.3"/></svg>
<div class="a" style="left:1611.0px;top:103.9px;font-size:12.5px;line-height:15px;color:#242424;transform:scaleX(0.9169);transform-origin:0 0;">Create</div>
<div class="a" style="left:1612.7px;top:120.3px;font-size:12.5px;line-height:15px;color:#242424;transform:scaleX(0.8553);transform-origin:0 0;">a PDF</div>
<div class="a" style="left:1589.0px;top:144.1px;font-size:12.5px;line-height:15px;color:#242424;transform:scaleX(0.9353);transform-origin:0 0;">Adobe Acrobat</div>
<div class="a" style="left:1669px;top:67px;width:1px;height:88px;background:#D6D6D6"></div>
<svg style="left:1692px;top:69px" width="17" height="30" viewBox="0 0 17 30" ><path d="M1 2C1 0.5 2 0 3 0H5C6 0 7 1 7 2V27C7 28.5 6 29 5 29H3C2 29 1 28 1 27Z" fill="#2B6CD3"/><path d="M11 27C11 24 13 22 15.5 22C15.5 25 14 28 11.5 28.5Z" fill="#2B6CD3"/></svg>
<div class="a" style="left:1681.0px;top:103.9px;font-size:12.5px;line-height:15px;color:#242424;transform:scaleX(0.9124);transform-origin:0 0;">Lawyal</div>
<div class="a" style="left:1686.0px;top:120.3px;font-size:12.5px;line-height:15px;color:#242424;transform:scaleX(0.9130);transform-origin:0 0;">Docs</div>
<div class="a" style="left:1681.0px;top:144.1px;font-size:12.5px;line-height:15px;color:#242424;transform:scaleX(0.9520);transform-origin:0 0;">Add-in</div>
<div class="a" style="left:1727px;top:67px;width:1px;height:88px;background:#D6D6D6"></div>
<svg style="left:1757px;top:68px" width="33" height="33" viewBox="0 0 33 33" ><rect x="0" y="0" width="2" height="2" fill="#111"/><rect x="4" y="0" width="2" height="2" fill="#111"/><rect x="10" y="0" width="2" height="2" fill="#111"/><rect x="12" y="0" width="2" height="2" fill="#111"/><rect x="16" y="0" width="2" height="2" fill="#111"/><rect x="18" y="0" width="2" height="2" fill="#111"/><rect x="22" y="0" width="2" height="2" fill="#111"/><rect x="26" y="0" width="2" height="2" fill="#111"/><rect x="30" y="0" width="2" height="2" fill="#111"/><rect x="10" y="2" width="2" height="2" fill="#111"/><rect x="16" y="2" width="2" height="2" fill="#111"/><rect x="18" y="2" width="2" height="2" fill="#111"/><rect x="22" y="2" width="2" height="2" fill="#111"/><rect x="0" y="4" width="2" height="2" fill="#111"/><rect x="4" y="4" width="2" height="2" fill="#111"/><rect x="10" y="4" width="2" height="2" fill="#111"/><rect x="12" y="4" width="2" height="2" fill="#111"/><rect x="14" y="4" width="2" height="2" fill="#111"/><rect x="18" y="4" width="2" height="2" fill="#111"/><rect x="22" y="4" width="2" height="2" fill="#111"/><rect x="26" y="4" width="2" height="2" fill="#111"/><rect x="28" y="4" width="2" height="2" fill="#111"/><rect x="14" y="6" width="2" height="2" fill="#111"/><rect x="26" y="6" width="2" height="2" fill="#111"/><rect x="0" y="8" width="2" height="2" fill="#111"/><rect x="2" y="8" width="2" height="2" fill="#111"/><rect x="8" y="8" width="2" height="2" fill="#111"/><rect x="12" y="8" width="2" height="2" fill="#111"/><rect x="14" y="8" width="2" height="2" fill="#111"/><rect x="16" y="8" width="2" height="2" fill="#111"/><rect x="22" y="8" width="2" height="2" fill="#111"/><rect x="26" y="8" width="2" height="2" fill="#111"/><rect x="30" y="8" width="2" height="2" fill="#111"/><rect x="8" y="10" width="2" height="2" fill="#111"/><rect x="10" y="10" width="2" height="2" fill="#111"/><rect x="14" y="10" width="2" height="2" fill="#111"/><rect x="16" y="10" width="2" height="2" fill="#111"/><rect x="18" y="10" width="2" height="2" fill="#111"/><rect x="22" y="10" width="2" height="2" fill="#111"/><rect x="24" y="10" width="2" height="2" fill="#111"/><rect x="28" y="10" width="2" height="2" fill="#111"/><rect x="2" y="12" width="2" height="2" fill="#111"/><rect x="4" y="12" width="2" height="2" fill="#111"/><rect x="20" y="12" width="2" height="2" fill="#111"/><rect x="24" y="12" width="2" height="2" fill="#111"/><rect x="26" y="12" width="2" height="2" fill="#111"/><rect x="2" y="14" width="2" height="2" fill="#111"/><rect x="4" y="14" width="2" height="2" fill="#111"/><rect x="8" y="14" width="2" height="2" fill="#111"/><rect x="14" y="14" width="2" height="2" fill="#111"/><rect x="18" y="14" width="2" height="2" fill="#111"/><rect x="22" y="14" width="2" height="2" fill="#111"/><rect x="28" y="14" width="2" height="2" fill="#111"/><rect x="30" y="14" width="2" height="2" fill="#111"/><rect x="4" y="16" width="2" height="2" fill="#111"/><rect x="6" y="16" width="2" height="2" fill="#111"/><rect x="10" y="16" width="2" height="2" fill="#111"/><rect x="12" y="16" width="2" height="2" fill="#111"/><rect x="14" y="16" width="2" height="2" fill="#111"/><rect x="16" y="16" width="2" height="2" fill="#111"/><rect x="20" y="16" width="2" height="2" fill="#111"/><rect x="22" y="16" width="2" height="2" fill="#111"/><rect x="26" y="16" width="2" height="2" fill="#111"/><rect x="0" y="18" width="2" height="2" fill="#111"/><rect x="2" y="18" width="2" height="2" fill="#111"/><rect x="6" y="18" width="2" height="2" fill="#111"/><rect x="8" y="18" width="2" height="2" fill="#111"/><rect x="10" y="18" width="2" height="2" fill="#111"/><rect x="14" y="18" width="2" height="2" fill="#111"/><rect x="16" y="18" width="2" height="2" fill="#111"/><rect x="18" y="18" width="2" height="2" fill="#111"/><rect x="22" y="18" width="2" height="2" fill="#111"/><rect x="26" y="18" width="2" height="2" fill="#111"/><rect x="28" y="18" width="2" height="2" fill="#111"/><rect x="2" y="20" width="2" height="2" fill="#111"/><rect x="4" y="20" width="2" height="2" fill="#111"/><rect x="6" y="20" width="2" height="2" fill="#111"/><rect x="10" y="20" width="2" height="2" fill="#111"/><rect x="16" y="20" width="2" height="2" fill="#111"/><rect x="18" y="20" width="2" height="2" fill="#111"/><rect x="26" y="20" width="2" height="2" fill="#111"/><rect x="28" y="20" width="2" height="2" fill="#111"/><rect x="30" y="20" width="2" height="2" fill="#111"/><rect x="2" y="22" width="2" height="2" fill="#111"/><rect x="4" y="22" width="2" height="2" fill="#111"/><rect x="6" y="22" width="2" height="2" fill="#111"/><rect x="8" y="22" width="2" height="2" fill="#111"/><rect x="10" y="22" width="2" height="2" fill="#111"/><rect x="14" y="22" width="2" height="2" fill="#111"/><rect x="16" y="22" width="2" height="2" fill="#111"/><rect x="24" y="22" width="2" height="2" fill="#111"/><rect x="30" y="22" width="2" height="2" fill="#111"/><rect x="8" y="24" width="2" height="2" fill="#111"/><rect x="10" y="24" width="2" height="2" fill="#111"/><rect x="12" y="24" width="2" height="2" fill="#111"/><rect x="14" y="24" width="2" height="2" fill="#111"/><rect x="18" y="24" width="2" height="2" fill="#111"/><rect x="22" y="24" width="2" height="2" fill="#111"/><rect x="4" y="26" width="2" height="2" fill="#111"/><rect x="8" y="26" width="2" height="2" fill="#111"/><rect x="10" y="26" width="2" height="2" fill="#111"/><rect x="16" y="26" width="2" height="2" fill="#111"/><rect x="22" y="26" width="2" height="2" fill="#111"/><rect x="24" y="26" width="2" height="2" fill="#111"/><rect x="28" y="26" width="2" height="2" fill="#111"/><rect x="0" y="28" width="2" height="2" fill="#111"/><rect x="2" y="28" width="2" height="2" fill="#111"/><rect x="8" y="28" width="2" height="2" fill="#111"/><rect x="18" y="28" width="2" height="2" fill="#111"/><rect x="24" y="28" width="2" height="2" fill="#111"/><rect x="26" y="28" width="2" height="2" fill="#111"/><rect x="28" y="28" width="2" height="2" fill="#111"/><rect x="0" y="30" width="2" height="2" fill="#111"/><rect x="2" y="30" width="2" height="2" fill="#111"/><rect x="6" y="30" width="2" height="2" fill="#111"/><rect x="8" y="30" width="2" height="2" fill="#111"/><rect x="10" y="30" width="2" height="2" fill="#111"/><rect x="12" y="30" width="2" height="2" fill="#111"/><rect x="14" y="30" width="2" height="2" fill="#111"/><rect x="20" y="30" width="2" height="2" fill="#111"/><rect x="24" y="30" width="2" height="2" fill="#111"/><rect x="26" y="30" width="2" height="2" fill="#111"/><rect x="28" y="30" width="2" height="2" fill="#111"/><rect x="0" y="0" width="8" height="8" fill="#fff"/><rect x="0.75" y="0.75" width="6.5" height="6.5" fill="none" stroke="#111" stroke-width="1.5"/><rect x="2.5" y="2.5" width="3" height="3" fill="#111"/><rect x="25" y="0" width="8" height="8" fill="#fff"/><rect x="25.75" y="0.75" width="6.5" height="6.5" fill="none" stroke="#111" stroke-width="1.5"/><rect x="27.5" y="2.5" width="3" height="3" fill="#111"/><rect x="0" y="25" width="8" height="8" fill="#fff"/><rect x="0.75" y="25.75" width="6.5" height="6.5" fill="none" stroke="#111" stroke-width="1.5"/><rect x="2.5" y="27.5" width="3" height="3" fill="#111"/><rect x="0" y="12" width="33" height="7" fill="#E81123"/><path d="M3 16H30" stroke="#fff" stroke-width="0.6" stroke-dasharray="2 0.6"/></svg>
<div class="a" style="left:1749.0px;top:103.9px;font-size:12.5px;line-height:15px;color:#242424;transform:scaleX(0.9078);transform-origin:0 0;">QR Code</div>
<div class="a" style="left:1755.0px;top:120.3px;font-size:12.5px;line-height:15px;color:#242424;transform:scaleX(0.8902);transform-origin:0 0;">Tracker</div>
<div class="a" style="left:1731.0px;top:144.1px;font-size:12.5px;line-height:15px;color:#242424;transform:scaleX(0.8534);transform-origin:0 0;">QR Code Tracker</div>
<div class="a" style="left:1817px;top:67px;width:1px;height:88px;background:#D6D6D6"></div>
<svg style="left:1877px;top:143px" width="12" height="8" viewBox="0 0 12 8" ><path d="M1 1L5.5 6L10 1" fill="none" stroke="#333" stroke-width="1.1"/></svg><div class="a" style="left:-4px;top:170px;width:110px;height:24px;background:#fff;border-radius:5px;border:1px solid #DCDCDC"></div>
<div class="a" style="left:0.0px;top:173.4px;font-size:14px;line-height:17px;color:#222;transform:scaleX(0.8876);transform-origin:0 0;">A1</div>
<svg style="left:90px;top:178px" width="12" height="8" viewBox="0 0 12 8" ><path d="M1 1L6 6L11 1" fill="none" stroke="#444" stroke-width="1.1"/></svg>
<svg style="left:114px;top:176px" width="6" height="13" viewBox="0 0 6 13" ><circle cx="2.8" cy="1.6" r="1.3" fill="#333"/><circle cx="2.8" cy="6" r="1.3" fill="#333"/><circle cx="2.8" cy="10.4" r="1.3" fill="#333"/></svg>
<div class="a" style="left:128px;top:170px;width:85px;height:24px;background:#fff;border-radius:5px;border:1px solid #DCDCDC"></div>
<svg style="left:133px;top:175px" width="14" height="14" viewBox="0 0 14 14" ><path d="M1 1L13 13M13 1L1 13" stroke="#B0B0B0" stroke-width="1"/></svg>
<svg style="left:155px;top:176px" width="18" height="12" viewBox="0 0 18 12" ><path d="M1 6L6 11L17 1" fill="none" stroke="#B0B0B0" stroke-width="1"/></svg>
<svg style="left:180px;top:172px" width="18" height="20" viewBox="0 0 18 20" ><text x="0.5" y="15.5" font-family="Liberation Serif" font-style="italic" font-size="17.5" fill="#333" textLength="15" lengthAdjust="spacingAndGlyphs">fx</text></svg>
<svg style="left:200px;top:177px" width="11" height="8" viewBox="0 0 11 8" ><path d="M1 1L5.5 5.5L10 1" fill="none" stroke="#777" stroke-width="1"/></svg>
<div class="a" style="left:218px;top:170px;width:1679px;height:24px;background:#fff;border-radius:5px;border:1px solid #DCDCDC"></div>
<svg style="left:1881px;top:177px" width="13" height="8" viewBox="0 0 13 8" ><path d="M1 1L6.5 6.5L12 1" fill="none" stroke="#444" stroke-width="1.1"/></svg><div class="a" style="left:0;top:202px;width:1884px;height:17px;background:#F0F0F0"></div>
<div class="a" style="left:0;top:219px;width:10px;height:739px;background:#F0F0F0"></div>
<div class="a" style="left:10px;top:219px;width:1874px;height:739px;background:#fff"></div>
<div class="a" style="left:10px;top:202px;width:88px;height:16px;background:#D3D3D3"></div>
<div class="a" style="left:0;top:219px;width:10px;height:20px;background:#D3D3D3"></div>
<svg style="left:0px;top:205px" width="8" height="12" viewBox="0 0 8 12" ><path d="M7 1V11H-2Z" fill="#B8B8B8"/></svg>
<div class="a" style="left:98px;top:202px;width:1px;height:16px;background:#B8B8B8"></div>
<div class="a" style="left:50.1px;top:203px;font-size:13.33px;line-height:16px;color:#0E5C30">A</div>
<div class="a" style="left:228px;top:202px;width:1px;height:16px;background:#B8B8B8"></div>
<div class="a" style="left:159.1px;top:203px;font-size:13.33px;line-height:16px;color:#222">B</div>
<div class="a" style="left:354px;top:202px;width:1px;height:16px;background:#B8B8B8"></div>
<div class="a" style="left:286.7px;top:203px;font-size:13.33px;line-height:16px;color:#222">C</div>
<div class="a" style="left:442px;top:202px;width:1px;height:16px;background:#B8B8B8"></div>
<div class="a" style="left:393.7px;top:203px;font-size:13.33px;line-height:16px;color:#222">D</div>
<div class="a" style="left:592px;top:202px;width:1px;height:16px;background:#B8B8B8"></div>
<div class="a" style="left:513.1px;top:203px;font-size:13.33px;line-height:16px;color:#222">E</div>
<div class="a" style="left:680px;top:202px;width:1px;height:16px;background:#B8B8B8"></div>
<div class="a" style="left:632.4px;top:203px;font-size:13.33px;line-height:16px;color:#222">F</div>
<div class="a" style="left:768px;top:202px;width:1px;height:16px;background:#B8B8B8"></div>
<div class="a" style="left:719.3px;top:203px;font-size:13.33px;line-height:16px;color:#222">G</div>
<div class="a" style="left:919px;top:202px;width:1px;height:16px;background:#B8B8B8"></div>
<div class="a" style="left:839.2px;top:203px;font-size:13.33px;line-height:16px;color:#222">H</div>
<div class="a" style="left:1007px;top:202px;width:1px;height:16px;background:#B8B8B8"></div>
<div class="a" style="left:961.6px;top:203px;font-size:13.33px;line-height:16px;color:#222">I</div>
<div class="a" style="left:1095px;top:202px;width:1px;height:16px;background:#B8B8B8"></div>
<div class="a" style="left:1048.2px;top:203px;font-size:13.33px;line-height:16px;color:#222">J</div>
<div class="a" style="left:1183px;top:202px;width:1px;height:16px;background:#B8B8B8"></div>
<div class="a" style="left:1135.1px;top:203px;font-size:13.33px;line-height:16px;color:#222">K</div>
<div class="a" style="left:1271px;top:202px;width:1px;height:16px;background:#B8B8B8"></div>
<div class="a" style="left:1223.8px;top:203px;font-size:13.33px;line-height:16px;color:#222">L</div>
<div class="a" style="left:1359px;top:202px;width:1px;height:16px;background:#B8B8B8"></div>
<div class="a" style="left:1309.9px;top:203px;font-size:13.33px;line-height:16px;color:#222">M</div>
<div class="a" style="left:1447px;top:202px;width:1px;height:16px;background:#B8B8B8"></div>
<div class="a" style="left:1398.7px;top:203px;font-size:13.33px;line-height:16px;color:#222">N</div>
<div class="a" style="left:1535px;top:202px;width:1px;height:16px;background:#B8B8B8"></div>
<div class="a" style="left:1486.3px;top:203px;font-size:13.33px;line-height:16px;color:#222">O</div>
<div class="a" style="left:1623px;top:202px;width:1px;height:16px;background:#B8B8B8"></div>
<div class="a" style="left:1575.1px;top:203px;font-size:13.33px;line-height:16px;color:#222">P</div>
<div class="a" style="left:1711px;top:202px;width:1px;height:16px;background:#B8B8B8"></div>
<div class="a" style="left:1662.3px;top:203px;font-size:13.33px;line-height:16px;color:#222">Q</div>
<div class="a" style="left:1799px;top:202px;width:1px;height:16px;background:#B8B8B8"></div>
<div class="a" style="left:1750.7px;top:203px;font-size:13.33px;line-height:16px;color:#222">R</div>
<div class="a" style="left:1887px;top:202px;width:1px;height:16px;background:#B8B8B8"></div>
<div class="a" style="left:1839.1px;top:203px;font-size:13.33px;line-height:16px;color:#222">S</div>
<div class="a" style="left:10px;top:202px;width:1px;height:16px;background:#B5B5B5"></div>
<div class="a" style="left:0;top:218px;width:1884px;height:1px;background:#ABABAB"></div>
<div class="a" style="left:10px;top:219px;width:1px;height:742px;background:#ABABAB"></div>
<div class="a" style="left:0;top:239px;width:10px;height:1px;background:#BDBDBD"></div>
<div class="a" style="left:0;top:256px;width:10px;height:1px;background:#BDBDBD"></div>
<div class="a" style="left:0;top:273px;width:10px;height:1px;background:#BDBDBD"></div>
<div class="a" style="left:0;top:290px;width:10px;height:1px;background:#BDBDBD"></div>
<div class="a" style="left:0;top:307px;width:10px;height:1px;background:#BDBDBD"></div>
<div class="a" style="left:0;top:328px;width:10px;height:1px;background:#BDBDBD"></div>
<div class="a" style="left:0;top:349px;width:10px;height:1px;background:#BDBDBD"></div>
<div class="a" style="left:0;top:366px;width:10px;height:1px;background:#BDBDBD"></div>
<div class="a" style="left:0;top:383px;width:10px;height:1px;background:#BDBDBD"></div>
<div class="a" style="left:0;top:400px;width:10px;height:1px;background:#BDBDBD"></div>
<div class="a" style="left:0;top:417px;width:10px;height:1px;background:#BDBDBD"></div>
<div class="a" style="left:0;top:438px;width:10px;height:1px;background:#BDBDBD"></div>
<div class="a" style="left:0;top:459px;width:10px;height:1px;background:#BDBDBD"></div>
<div class="a" style="left:0;top:480px;width:10px;height:1px;background:#BDBDBD"></div>
<div class="a" style="left:0;top:501px;width:10px;height:1px;background:#BDBDBD"></div>
<div class="a" style="left:0;top:522px;width:10px;height:1px;background:#BDBDBD"></div>
<div class="a" style="left:0;top:543px;width:10px;height:1px;background:#BDBDBD"></div>
<div class="a" style="left:0;top:564px;width:10px;height:1px;background:#BDBDBD"></div>
<div class="a" style="left:0;top:585px;width:10px;height:1px;background:#BDBDBD"></div>
<div class="a" style="left:0;top:606px;width:10px;height:1px;background:#BDBDBD"></div>
<div class="a" style="left:0;top:627px;width:10px;height:1px;background:#BDBDBD"></div>
<div class="a" style="left:0;top:648px;width:10px;height:1px;background:#BDBDBD"></div>
<div class="a" style="left:0;top:669px;width:10px;height:1px;background:#BDBDBD"></div>
<div class="a" style="left:0;top:686px;width:10px;height:1px;background:#BDBDBD"></div>
<div class="a" style="left:0;top:703px;width:10px;height:1px;background:#BDBDBD"></div>
<div class="a" style="left:0;top:720px;width:10px;height:1px;background:#BDBDBD"></div>
<div class="a" style="left:0;top:737px;width:10px;height:1px;background:#BDBDBD"></div>
<div class="a" style="left:0;top:754px;width:10px;height:1px;background:#BDBDBD"></div>
<div class="a" style="left:0;top:771px;width:10px;height:1px;background:#BDBDBD"></div>
<div class="a" style="left:0;top:788px;width:10px;height:1px;background:#BDBDBD"></div>
<div class="a" style="left:0;top:805px;width:10px;height:1px;background:#BDBDBD"></div>
<div class="a" style="left:0;top:822px;width:10px;height:1px;background:#BDBDBD"></div>
<div class="a" style="left:0;top:839px;width:10px;height:1px;background:#BDBDBD"></div>
<div class="a" style="left:0;top:856px;width:10px;height:1px;background:#BDBDBD"></div>
<div class="a" style="left:0;top:873px;width:10px;height:1px;background:#BDBDBD"></div>
<div class="a" style="left:0;top:894px;width:10px;height:1px;background:#BDBDBD"></div>
<div class="a" style="left:0;top:915px;width:10px;height:1px;background:#BDBDBD"></div>
<div class="a" style="left:0;top:936px;width:10px;height:1px;background:#BDBDBD"></div>
<div class="a" style="left:0;top:957px;width:10px;height:1px;background:#BDBDBD"></div>
<svg style="left:0;top:0" width="1904" height="1015" viewBox="0 0 1904 1015"><path d="M10 239.5H379M1299 239.5H1884" stroke="#E1E1E1"/><path d="M10 256.5H379M1299 256.5H1884" stroke="#E1E1E1"/><path d="M10 273.5H379M1299 273.5H1884" stroke="#E1E1E1"/><path d="M10 290.5H379M1299 290.5H1884" stroke="#E1E1E1"/><path d="M10 307.5H379M1299 307.5H1884" stroke="#E1E1E1"/><path d="M10 328.5H379M1299 328.5H1884" stroke="#E1E1E1"/><path d="M10 349.5H379M1299 349.5H1884" stroke="#E1E1E1"/><path d="M10 366.5H379M1299 366.5H1884" stroke="#E1E1E1"/><path d="M10 383.5H379M1299 383.5H1884" stroke="#E1E1E1"/><path d="M10 400.5H379M1299 400.5H1884" stroke="#E1E1E1"/><path d="M10 417.5H379M1299 417.5H1884" stroke="#E1E1E1"/><path d="M10 438.5H379M1299 438.5H1884" stroke="#E1E1E1"/><path d="M10 459.5H379M1299 459.5H1884" stroke="#E1E1E1"/><path d="M10 480.5H379M1299 480.5H1884" stroke="#E1E1E1"/><path d="M10 501.5H379M1299 501.5H1884" stroke="#E1E1E1"/><path d="M10 522.5H379M1299 522.5H1884" stroke="#E1E1E1"/><path d="M10 543.5H379M1299 543.5H1884" stroke="#E1E1E1"/><path d="M10 564.5H379M1299 564.5H1884" stroke="#E1E1E1"/><path d="M10 585.5H379M1299 585.5H1884" stroke="#E1E1E1"/><path d="M10 606.5H1884" stroke="#E1E1E1"/><path d="M10 627.5H1884" stroke="#E1E1E1"/><path d="M10 648.5H1884" stroke="#E1E1E1"/><path d="M10 669.5H1884" stroke="#E1E1E1"/><path d="M10 686.5H1884" stroke="#E1E1E1"/><path d="M10 703.5H1884" stroke="#E1E1E1"/><path d="M10 720.5H1884" stroke="#E1E1E1"/><path d="M10 737.5H1884" stroke="#E1E1E1"/><path d="M10 754.5H1884" stroke="#E1E1E1"/><path d="M10 771.5H1884" stroke="#E1E1E1"/><path d="M10 788.5H1884" stroke="#E1E1E1"/><path d="M10 805.5H1884" stroke="#E1E1E1"/><path d="M10 822.5H1884" stroke="#E1E1E1"/><path d="M10 839.5H1884" stroke="#E1E1E1"/><path d="M10 856.5H1884" stroke="#E1E1E1"/><path d="M10 873.5H1884" stroke="#E1E1E1"/><path d="M10 894.5H1884" stroke="#E1E1E1"/><path d="M10 915.5H1884" stroke="#E1E1E1"/><path d="M10 936.5H1884" stroke="#E1E1E1"/><path d="M10 957.5H118M1675 957.5H1884" stroke="#E1E1E1"/><path d="M98.5 219V961" stroke="#E1E1E1"/><path d="M228.5 219V948.5" stroke="#E1E1E1"/><path d="M354.5 219V948.5" stroke="#E1E1E1"/><path d="M442.5 219V235M442.5 605V948.5" stroke="#E1E1E1"/><path d="M592.5 219V235M592.5 605V948.5" stroke="#E1E1E1"/><path d="M680.5 219V235M680.5 605V948.5" stroke="#E1E1E1"/><path d="M768.5 219V235M768.5 605V948.5" stroke="#E1E1E1"/><path d="M919.5 219V235M919.5 605V948.5" stroke="#E1E1E1"/><path d="M1007.5 219V235M1007.5 605V948.5" stroke="#E1E1E1"/><path d="M1095.5 219V235M1095.5 605V948.5" stroke="#E1E1E1"/><path d="M1183.5 219V235M1183.5 605V948.5" stroke="#E1E1E1"/><path d="M1271.5 219V235M1271.5 605V948.5" stroke="#E1E1E1"/><path d="M1359.5 219V948.5" stroke="#E1E1E1"/><path d="M1447.5 219V948.5" stroke="#E1E1E1"/><path d="M1535.5 219V948.5" stroke="#E1E1E1"/><path d="M1623.5 219V948.5" stroke="#E1E1E1"/><path d="M1711.5 219V961" stroke="#E1E1E1"/><path d="M1799.5 219V961" stroke="#E1E1E1"/></svg>
<div class="a" style="left:-6.0px;top:240.6px;font-size:13.33px;line-height:15px;color:#222">2</div>
<div class="a" style="left:-6.0px;top:257.6px;font-size:13.33px;line-height:15px;color:#222">3</div>
<div class="a" style="left:-6.0px;top:274.6px;font-size:13.33px;line-height:15px;color:#222">4</div>
<div class="a" style="left:-6.0px;top:291.6px;font-size:13.33px;line-height:15px;color:#222">5</div>
<div class="a" style="left:-6.0px;top:312.6px;font-size:13.33px;line-height:15px;color:#222">6</div>
<div class="a" style="left:-6.0px;top:333.6px;font-size:13.33px;line-height:15px;color:#222">7</div>
<div class="a" style="left:-6.0px;top:350.6px;font-size:13.33px;line-height:15px;color:#222">8</div>
<div class="a" style="left:-6.0px;top:367.6px;font-size:13.33px;line-height:15px;color:#222">9</div>
<div class="a" style="left:-9.7px;top:384.6px;font-size:13.33px;line-height:15px;color:#222">10</div>
<div class="a" style="left:-9.2px;top:401.6px;font-size:13.33px;line-height:15px;color:#222">11</div>
<div class="a" style="left:-9.7px;top:422.6px;font-size:13.33px;line-height:15px;color:#222">12</div>
<div class="a" style="left:-9.7px;top:443.6px;font-size:13.33px;line-height:15px;color:#222">13</div>
<div class="a" style="left:-9.7px;top:464.6px;font-size:13.33px;line-height:15px;color:#222">14</div>
<div class="a" style="left:-9.7px;top:485.6px;font-size:13.33px;line-height:15px;color:#222">15</div>
<div class="a" style="left:-9.7px;top:506.6px;font-size:13.33px;line-height:15px;color:#222">16</div>
<div class="a" style="left:-9.7px;top:527.6px;font-size:13.33px;line-height:15px;color:#222">17</div>
<div class="a" style="left:-9.7px;top:548.6px;font-size:13.33px;line-height:15px;color:#222">18</div>
<div class="a" style="left:-9.7px;top:569.6px;font-size:13.33px;line-height:15px;color:#222">19</div>
<div class="a" style="left:-9.7px;top:590.6px;font-size:13.33px;line-height:15px;color:#222">20</div>
<div class="a" style="left:-9.7px;top:611.6px;font-size:13.33px;line-height:15px;color:#222">21</div>
<div class="a" style="left:-9.7px;top:632.6px;font-size:13.33px;line-height:15px;color:#222">22</div>
<div class="a" style="left:-9.7px;top:653.6px;font-size:13.33px;line-height:15px;color:#222">23</div>
<div class="a" style="left:-9.7px;top:670.6px;font-size:13.33px;line-height:15px;color:#222">24</div>
<div class="a" style="left:-9.7px;top:687.6px;font-size:13.33px;line-height:15px;color:#222">25</div>
<div class="a" style="left:-9.7px;top:704.6px;font-size:13.33px;line-height:15px;color:#222">26</div>
<div class="a" style="left:-9.7px;top:721.6px;font-size:13.33px;line-height:15px;color:#222">27</div>
<div class="a" style="left:-9.7px;top:738.6px;font-size:13.33px;line-height:15px;color:#222">28</div>
<div class="a" style="left:-9.7px;top:755.6px;font-size:13.33px;line-height:15px;color:#222">29</div>
<div class="a" style="left:-9.7px;top:772.6px;font-size:13.33px;line-height:15px;color:#222">30</div>
<div class="a" style="left:-9.7px;top:789.6px;font-size:13.33px;line-height:15px;color:#222">31</div>
<div class="a" style="left:-9.7px;top:806.6px;font-size:13.33px;line-height:15px;color:#222">32</div>
<div class="a" style="left:-9.7px;top:823.6px;font-size:13.33px;line-height:15px;color:#222">33</div>
<div class="a" style="left:-9.7px;top:840.6px;font-size:13.33px;line-height:15px;color:#222">34</div>
<div class="a" style="left:-9.7px;top:857.6px;font-size:13.33px;line-height:15px;color:#222">35</div>
<div class="a" style="left:-9.7px;top:878.6px;font-size:13.33px;line-height:15px;color:#222">36</div>
<div class="a" style="left:-9.7px;top:899.6px;font-size:13.33px;line-height:15px;color:#222">37</div>
<div class="a" style="left:-9.7px;top:920.6px;font-size:13.33px;line-height:15px;color:#222">38</div>
<div class="a" style="left:-9.7px;top:941.6px;font-size:13.33px;line-height:15px;color:#222">39</div><div class="a" style="left:379px;top:235px;width:920px;height:370px;background:#fff"></div>
<svg style="left:0;top:0" width="1904" height="1015" viewBox="0 0 1904 1015"><path d="M424.5 485.5H1280.5" stroke="#CCCCCC" stroke-width="1"/><path d="M424.5 419.5H1280.5" stroke="#CCCCCC" stroke-width="1"/><path d="M424.5 352.5H1280.5" stroke="#CCCCCC" stroke-width="1"/><path d="M424.5 286.5H1280.5" stroke="#CCCCCC" stroke-width="1"/><path d="M424.5 551.5H1280.5" stroke="#333" stroke-width="1.2"/><text x="417.5" y="555.8" text-anchor="end" font-family="Liberation Sans" font-size="11.8" fill="#222">0</text><text x="417.5" y="489.6" text-anchor="end" font-family="Liberation Sans" font-size="11.8" fill="#222">25</text><text x="417.5" y="423.3" text-anchor="end" font-family="Liberation Sans" font-size="11.8" fill="#222">50</text><text x="417.5" y="357.1" text-anchor="end" font-family="Liberation Sans" font-size="11.8" fill="#222">75</text><text x="417.5" y="290.8" text-anchor="end" font-family="Liberation Sans" font-size="11.8" fill="#222">100</text><text transform="translate(434.4 558.8) rotate(-90)" text-anchor="end" font-family="Liberation Sans" font-size="11.8" fill="#222">1</text><text transform="translate(460.3 558.8) rotate(-90)" text-anchor="end" font-family="Liberation Sans" font-size="11.8" fill="#222">12</text><text transform="translate(486.3 558.8) rotate(-90)" text-anchor="end" font-family="Liberation Sans" font-size="11.8" fill="#222">13</text><text transform="translate(512.2 558.8) rotate(-90)" text-anchor="end" font-family="Liberation Sans" font-size="11.8" fill="#222">22</text><text transform="translate(538.1 558.8) rotate(-90)" text-anchor="end" font-family="Liberation Sans" font-size="11.8" fill="#222">115</text><text transform="translate(564.1 558.8) rotate(-90)" text-anchor="end" font-family="Liberation Sans" font-size="11.8" fill="#222">2</text><text transform="translate(590.0 558.8) rotate(-90)" text-anchor="end" font-family="Liberation Sans" font-size="11.8" fill="#222">39</text><text transform="translate(616.0 558.8) rotate(-90)" text-anchor="end" font-family="Liberation Sans" font-size="11.8" fill="#222">54</text><text transform="translate(641.9 558.8) rotate(-90)" text-anchor="end" font-family="Liberation Sans" font-size="11.8" fill="#222">21</text><text transform="translate(667.8 558.8) rotate(-90)" text-anchor="end" font-family="Liberation Sans" font-size="11.8" fill="#222">15</text><text transform="translate(693.8 558.8) rotate(-90)" text-anchor="end" font-family="Liberation Sans" font-size="11.8" fill="#222">44</text><text transform="translate(719.7 558.8) rotate(-90)" text-anchor="end" font-family="Liberation Sans" font-size="11.8" fill="#222">7</text><text transform="translate(745.7 558.8) rotate(-90)" text-anchor="end" font-family="Liberation Sans" font-size="11.8" fill="#222">14</text><text transform="translate(771.6 558.8) rotate(-90)" text-anchor="end" font-family="Liberation Sans" font-size="11.8" fill="#222">98</text><text transform="translate(797.5 558.8) rotate(-90)" text-anchor="end" font-family="Liberation Sans" font-size="11.8" fill="#222">28</text><text transform="translate(823.5 558.8) rotate(-90)" text-anchor="end" font-family="Liberation Sans" font-size="11.8" fill="#222">5</text><text transform="translate(849.4 558.8) rotate(-90)" text-anchor="end" font-family="Liberation Sans" font-size="11.8" fill="#222">19</text><text transform="translate(875.4 558.8) rotate(-90)" text-anchor="end" font-family="Liberation Sans" font-size="11.8" fill="#222">16</text><text transform="translate(901.3 558.8) rotate(-90)" text-anchor="end" font-family="Liberation Sans" font-size="11.8" fill="#222">4</text><text transform="translate(927.2 558.8) rotate(-90)" text-anchor="end" font-family="Liberation Sans" font-size="11.8" fill="#222">18</text><text transform="translate(953.2 558.8) rotate(-90)" text-anchor="end" font-family="Liberation Sans" font-size="11.8" fill="#222">70</text><text transform="translate(979.1 558.8) rotate(-90)" text-anchor="end" font-family="Liberation Sans" font-size="11.8" fill="#222">6</text><text transform="translate(1005.1 558.8) rotate(-90)" text-anchor="end" font-family="Liberation Sans" font-size="11.8" fill="#222">274</text><text transform="translate(1031.0 558.8) rotate(-90)" text-anchor="end" font-family="Liberation Sans" font-size="11.8" fill="#222">1464</text><text transform="translate(1056.9 558.8) rotate(-90)" text-anchor="end" font-family="Liberation Sans" font-size="11.8" fill="#222">37</text><text transform="translate(1082.9 558.8) rotate(-90)" text-anchor="end" font-family="Liberation Sans" font-size="11.8" fill="#222">41</text><text transform="translate(1108.8 558.8) rotate(-90)" text-anchor="end" font-family="Liberation Sans" font-size="11.8" fill="#222">146</text><text transform="translate(1134.7 558.8) rotate(-90)" text-anchor="end" font-family="Liberation Sans" font-size="11.8" fill="#222">85</text><text transform="translate(1160.7 558.8) rotate(-90)" text-anchor="end" font-family="Liberation Sans" font-size="11.8" fill="#222">66</text><text transform="translate(1186.6 558.8) rotate(-90)" text-anchor="end" font-family="Liberation Sans" font-size="11.8" fill="#222">51</text><text transform="translate(1212.6 558.8) rotate(-90)" text-anchor="end" font-family="Liberation Sans" font-size="11.8" fill="#222">332</text><text transform="translate(1238.5 558.8) rotate(-90)" text-anchor="end" font-family="Liberation Sans" font-size="11.8" fill="#222">35</text><text transform="translate(1264.4 558.8) rotate(-90)" text-anchor="end" font-family="Liberation Sans" font-size="11.8" fill="#222">29</text><path d="M430.98 378.19C433.15 382.52 439.63 400.89 443.95 404.16C448.28 407.43 452.60 380.31 456.92 397.80C461.25 415.29 465.57 498.37 469.89 509.10C474.22 519.83 478.54 478.54 482.86 462.19C487.19 445.85 491.51 404.20 495.83 411.05C500.16 417.90 504.48 492.76 508.80 503.27C513.13 513.78 517.45 475.53 521.77 474.12C526.10 472.71 530.42 495.89 534.74 494.79C539.07 493.69 543.39 480.57 547.71 467.50C552.04 454.42 556.36 428.41 560.68 416.35C565.01 404.29 569.33 384.11 573.65 395.15C577.97 406.19 582.30 484.76 586.62 482.60C590.94 480.44 595.27 383.05 599.59 382.16C603.91 381.28 608.24 478.36 612.56 477.30C616.88 476.24 621.21 378.81 625.53 375.81C629.85 372.80 634.18 443.69 638.50 459.28C642.82 474.87 647.15 468.11 651.47 469.35C655.79 470.59 660.12 468.02 664.44 466.70C668.76 465.38 673.09 473.72 677.41 461.40C681.73 449.08 686.06 400.36 690.38 392.76C694.70 385.17 699.03 418.96 703.35 415.82C707.67 412.68 711.99 373.42 716.32 373.95C720.64 374.48 724.96 405.62 729.29 419.00C733.61 432.38 737.93 453.01 742.26 454.25C746.58 455.48 750.90 426.55 755.23 426.42C759.55 426.29 763.87 449.17 768.20 453.45C772.52 457.73 776.84 452.88 781.17 452.12C785.49 451.37 789.81 448.50 794.14 448.94C798.46 449.39 802.78 466.26 807.11 454.77C811.43 443.29 815.75 382.65 820.08 380.04C824.40 377.44 828.72 433.18 833.05 439.14C837.37 445.10 841.69 417.14 846.02 415.82C850.34 414.50 854.66 428.89 858.98 431.19C863.31 433.49 867.63 430.09 871.95 429.60C876.28 429.11 880.60 438.08 884.92 428.27C889.25 418.47 893.57 372.49 897.89 370.77C902.22 369.05 906.54 416.97 910.86 417.94C915.19 418.91 919.51 378.63 923.83 376.60C928.16 374.57 932.48 399.30 936.80 405.75C941.13 412.20 945.45 413.52 949.77 415.29C954.10 417.06 958.42 427.88 962.74 416.35C967.07 404.82 971.39 357.61 975.71 346.12C980.04 334.64 984.36 338.22 988.68 347.45C993.01 356.68 997.33 398.77 1001.65 401.51C1005.97 404.25 1010.30 366.18 1014.62 363.88C1018.94 361.58 1023.27 389.23 1027.59 387.73C1031.91 386.23 1036.24 355.53 1040.56 354.87C1044.88 354.21 1049.21 383.75 1053.53 383.75C1057.85 383.75 1062.18 358.31 1066.50 354.87C1070.82 351.43 1075.15 361.80 1079.47 363.09C1083.79 364.37 1088.12 364.19 1092.44 362.56C1096.76 360.92 1101.09 355.62 1105.41 353.28C1109.73 350.94 1114.06 348.95 1118.38 348.51C1122.70 348.07 1127.03 352.26 1131.35 350.63C1135.67 349.00 1139.99 341.00 1144.32 338.71C1148.64 336.41 1152.96 336.94 1157.29 336.85C1161.61 336.76 1165.93 338.31 1170.26 338.18C1174.58 338.04 1178.90 336.36 1183.23 336.06C1187.55 335.75 1191.87 336.89 1196.20 336.32C1200.52 335.75 1204.84 333.76 1209.17 332.61C1213.49 331.46 1217.81 330.09 1222.14 329.43C1226.46 328.77 1230.78 330.00 1235.11 328.63C1239.43 327.27 1243.75 322.94 1248.08 321.22C1252.40 319.49 1256.72 320.38 1261.05 318.30C1265.37 316.22 1271.85 310.35 1274.02 308.76" fill="none" stroke="#4285F4" stroke-width="2" stroke-linejoin="round"/><path d="M430.98 459.81C433.15 455.48 439.63 437.11 443.95 433.84C448.28 430.57 452.60 457.69 456.92 440.20C461.25 422.71 465.57 339.63 469.89 328.90C474.22 318.17 478.54 359.46 482.86 375.81C487.19 392.15 491.51 433.80 495.83 426.95C500.16 420.10 504.48 345.24 508.80 334.73C513.13 324.22 517.45 362.47 521.77 363.88C526.10 365.29 530.42 342.11 534.74 343.21C539.07 344.31 543.39 357.43 547.71 370.50C552.04 383.58 556.36 409.59 560.68 421.65C565.01 433.71 569.33 453.89 573.65 442.85C577.97 431.81 582.30 353.24 586.62 355.40C590.94 357.56 595.27 454.95 599.59 455.83C603.91 456.72 608.24 359.64 612.56 360.70C616.88 361.76 621.21 459.19 625.53 462.19C629.85 465.20 634.18 394.31 638.50 378.72C642.82 363.13 647.15 369.89 651.47 368.65C655.79 367.41 660.12 369.98 664.44 371.30C668.76 372.62 673.09 364.28 677.41 376.60C681.73 388.92 686.06 437.64 690.38 445.24C694.70 452.83 699.03 419.04 703.35 422.18C707.67 425.32 711.99 464.58 716.32 464.05C720.64 463.52 724.96 432.38 729.29 419.00C733.61 405.62 737.93 384.99 742.26 383.75C746.58 382.52 750.90 411.45 755.23 411.58C759.55 411.71 763.87 388.83 768.20 384.55C772.52 380.27 776.84 385.12 781.17 385.88C785.49 386.63 789.81 389.50 794.14 389.06C798.46 388.61 802.78 371.74 807.11 383.23C811.43 394.71 815.75 455.35 820.08 457.95C824.40 460.56 828.72 404.82 833.05 398.86C837.37 392.90 841.69 420.86 846.02 422.18C850.34 423.50 854.66 409.11 858.98 406.81C863.31 404.51 867.63 407.91 871.95 408.40C876.28 408.89 880.60 399.92 884.92 409.73C889.25 419.53 893.57 465.51 897.89 467.23C902.22 468.95 906.54 421.03 910.86 420.06C915.19 419.09 919.51 459.37 923.83 461.40C928.16 463.43 932.48 438.70 936.80 432.25C941.13 425.80 945.45 424.48 949.77 422.71C954.10 420.94 958.42 410.12 962.74 421.65C967.07 433.18 971.39 480.39 975.71 491.88C980.04 503.36 984.36 499.78 988.68 490.55C993.01 481.32 997.33 439.23 1001.65 436.49C1005.97 433.75 1010.30 471.82 1014.62 474.12C1018.94 476.42 1023.27 448.77 1027.59 450.27C1031.91 451.77 1036.24 482.47 1040.56 483.13C1044.88 483.79 1049.21 454.25 1053.53 454.25C1057.85 454.25 1062.18 479.69 1066.50 483.13C1070.82 486.57 1075.15 476.20 1079.47 474.91C1083.79 473.63 1088.12 473.81 1092.44 475.44C1096.76 477.08 1101.09 482.38 1105.41 484.72C1109.73 487.06 1114.06 489.05 1118.38 489.49C1122.70 489.93 1127.03 485.74 1131.35 487.37C1135.67 489.00 1139.99 497.00 1144.32 499.29C1148.64 501.59 1152.96 501.06 1157.29 501.15C1161.61 501.24 1165.93 499.69 1170.26 499.82C1174.58 499.96 1178.90 501.64 1183.23 501.94C1187.55 502.25 1191.87 501.11 1196.20 501.68C1200.52 502.25 1204.84 504.24 1209.17 505.39C1213.49 506.54 1217.81 507.91 1222.14 508.57C1226.46 509.23 1230.78 508.00 1235.11 509.37C1239.43 510.73 1243.75 515.06 1248.08 516.78C1252.40 518.51 1256.72 517.62 1261.05 519.70C1265.37 521.78 1271.85 527.65 1274.02 529.24" fill="none" stroke="#EA4335" stroke-width="2" stroke-linejoin="round"/><rect x="735.4" y="258.8" width="12.2" height="3.6" rx="1.6" fill="#4285F4"/><rect x="828.4" y="258.8" width="12.4" height="3.6" rx="1.6" fill="#EA4335"/><text x="756.6" y="263.9" font-family="Liberation Sans" font-size="11.8" fill="#222" textLength="55.8" lengthAdjust="spacingAndGlyphs">pop_u (%)</text><text x="849.6" y="263.9" font-family="Liberation Sans" font-size="11.8" fill="#222" textLength="93" lengthAdjust="spacingAndGlyphs">pop_r (Rounded)</text></svg><div class="a" style="left:34.8px;top:240.6px;font-size:13.33px;line-height:15px;color:#000;font-weight:bold;">metric</div>
<div class="a" style="left:131.1px;top:240.6px;font-size:13.33px;line-height:15px;color:#000;font-weight:bold;">real-world</div>
<div class="a" style="left:263.2px;top:240.6px;font-size:13.33px;line-height:15px;color:#000;font-weight:bold;">Our-data</div>
<div class="a" style="left:31.8px;top:257.6px;font-size:13.33px;line-height:15px;color:#000;font-weight:bold;">tot Pop</div>
<div class="a" style="left:121.7px;top:257.6px;font-size:13.33px;line-height:15px;color:#000;transform:scaleX(0.95);transform-origin:103.8px 0;">7,821,000,000.00</div>
<div class="a" style="left:247.7px;top:257.6px;font-size:13.33px;line-height:15px;color:#000;transform:scaleX(0.95);transform-origin:103.8px 0;">7,786,695,107.75</div>
<div class="a" style="left:14.8px;top:274.6px;font-size:13.33px;line-height:15px;color:#000;font-weight:bold;">urban_share</div>
<div class="a" style="left:198.8px;top:274.6px;font-size:13.33px;line-height:15px;color:#000;transform:scaleX(0.95);transform-origin:26.7px 0;">55%</div>
<div class="a" style="left:306.3px;top:274.6px;font-size:13.33px;line-height:15px;color:#000;transform:scaleX(0.95);transform-origin:45.2px 0;">56.19%</div>
<div class="a" style="left:23.3px;top:291.6px;font-size:13.33px;line-height:15px;color:#000;font-weight:bold;">urban_val</div>
<div class="a" style="left:121.7px;top:291.6px;font-size:13.33px;line-height:15px;color:#000;transform:scaleX(0.95);transform-origin:103.8px 0;">4,301,550,000.00</div>
<div class="a" style="left:247.7px;top:291.6px;font-size:13.33px;line-height:15px;color:#000;transform:scaleX(0.95);transform-origin:103.8px 0;">4,375,308,462.55</div>
<div class="a" style="left:26.7px;top:350.6px;font-size:13.33px;line-height:15px;color:#000;font-weight:bold;">total_diff</div>
<div class="a" style="left:147.7px;top:350.6px;font-size:13.33px;line-height:15px;color:#000;transform:scaleX(0.95);transform-origin:77.8px 0;">0.439589472</div>
<div class="a" style="left:23.7px;top:367.6px;font-size:13.33px;line-height:15px;color:#000;font-weight:bold;">u_val_diff</div>
<div class="a" style="left:147.7px;top:367.6px;font-size:13.33px;line-height:15px;color:#000;transform:scaleX(0.95);transform-origin:77.8px 0;">2.139668561</div>
<div class="a" style="left:15.2px;top:384.6px;font-size:13.33px;line-height:15px;color:#000;font-weight:bold;">u_share_diff</div>
<div class="a" style="left:148.7px;top:384.6px;font-size:13.33px;line-height:15px;color:#000;transform:scaleX(0.95);transform-origin:76.8px 0;">1.700119067</div>
<div class="a" style="left:35.2px;top:670.6px;font-size:13.33px;line-height:15px;color:#000;font-weight:bold;">Metric</div>
<div class="a" style="left:98px;top:670px;width:130px;height:17px;background:#FF0000"></div><div class="a" style="left:128.9px;top:670.6px;font-size:13.33px;line-height:15px;color:#fff;font-weight:bold;">wat_bas_n</div>
<div class="a" style="left:228px;top:670px;width:126px;height:17px;background:#00FFFF"></div><div class="a" style="left:258.8px;top:670.6px;font-size:13.33px;line-height:15px;color:#000;font-weight:bold;">wat_lim_n</div>
<div class="a" style="left:354px;top:670px;width:88px;height:17px;background:#FF6D01"></div><div class="a" style="left:355.4px;top:670.6px;font-size:13.33px;line-height:15px;color:#fff;font-weight:bold;">wat_unimp_n</div>
<div class="a" style="left:442px;top:670px;width:150px;height:17px;background:#F1BE32"></div><div class="a" style="left:484.0px;top:670.6px;font-size:13.33px;line-height:15px;color:#fff;font-weight:bold;">wat_sur_n</div>
<div class="a" style="left:592px;top:670px;width:88px;height:17px;background:#3C78D8"></div><div class="a" style="left:603.4px;top:670.6px;font-size:13.33px;line-height:15px;color:#fff;font-weight:bold;">wat_bas_r</div>
<div class="a" style="left:680px;top:670px;width:88px;height:17px;background:#00FFFF"></div><div class="a" style="left:693.3px;top:670.6px;font-size:13.33px;line-height:15px;color:#000;font-weight:bold;">wat_lim_r</div>
<div class="a" style="left:768px;top:670px;width:151px;height:17px;background:#FF6D01"></div><div class="a" style="left:802.4px;top:670.6px;font-size:13.33px;line-height:15px;color:#fff;font-weight:bold;">wat_unimp_r</div>
<div class="a" style="left:919px;top:670px;width:88px;height:17px;background:#F1BE32"></div><div class="a" style="left:931.5px;top:670.6px;font-size:13.33px;line-height:15px;color:#fff;font-weight:bold;">wat_sur_r</div>
<div class="a" style="left:1007px;top:670px;width:88px;height:17px;background:#3C78D8"></div><div class="a" style="left:1016.9px;top:670.6px;font-size:13.33px;line-height:15px;color:#fff;font-weight:bold;">wat_bas_u</div>
<div class="a" style="left:1095px;top:670px;width:88px;height:17px;background:#00FFFF"></div><div class="a" style="left:1106.8px;top:670.6px;font-size:13.33px;line-height:15px;color:#000;font-weight:bold;">wat_lim_u</div>
<div class="a" style="left:1183px;top:670px;width:88px;height:17px;background:#FF6D01"></div><div class="a" style="left:1184.4px;top:670.6px;font-size:13.33px;line-height:15px;color:#fff;font-weight:bold;">wat_unimp_u</div>
<div class="a" style="left:1271px;top:670px;width:88px;height:17px;background:#F1BE32"></div><div class="a" style="left:1282.0px;top:670.6px;font-size:13.33px;line-height:15px;color:#fff;font-weight:bold;">wat_sur_u</div>
<div class="a" style="left:43.3px;top:687.6px;font-size:13.33px;line-height:15px;color:#000;font-weight:bold;">Min</div>
<div class="a" style="left:218.1px;top:687.6px;font-size:13.33px;line-height:15px;color:#000;transform:scaleX(0.95);transform-origin:7.4px 0;">0</div>
<div class="a" style="left:344.1px;top:687.6px;font-size:13.33px;line-height:15px;color:#000;transform:scaleX(0.95);transform-origin:7.4px 0;">0</div>
<div class="a" style="left:432.1px;top:687.6px;font-size:13.33px;line-height:15px;color:#000;transform:scaleX(0.95);transform-origin:7.4px 0;">0</div>
<div class="a" style="left:582.1px;top:687.6px;font-size:13.33px;line-height:15px;color:#000;transform:scaleX(0.95);transform-origin:7.4px 0;">0</div>
<div class="a" style="left:670.1px;top:687.6px;font-size:13.33px;line-height:15px;color:#000;transform:scaleX(0.95);transform-origin:7.4px 0;">0</div>
<div class="a" style="left:758.1px;top:687.6px;font-size:13.33px;line-height:15px;color:#000;transform:scaleX(0.95);transform-origin:7.4px 0;">0</div>
<div class="a" style="left:909.1px;top:687.6px;font-size:13.33px;line-height:15px;color:#000;transform:scaleX(0.95);transform-origin:7.4px 0;">0</div>
<div class="a" style="left:997.1px;top:687.6px;font-size:13.33px;line-height:15px;color:#000;transform:scaleX(0.95);transform-origin:7.4px 0;">0</div>
<div class="a" style="left:1085.1px;top:687.6px;font-size:13.33px;line-height:15px;color:#000;transform:scaleX(0.95);transform-origin:7.4px 0;">0</div>
<div class="a" style="left:1173.1px;top:687.6px;font-size:13.33px;line-height:15px;color:#000;transform:scaleX(0.95);transform-origin:7.4px 0;">0</div>
<div class="a" style="left:1261.1px;top:687.6px;font-size:13.33px;line-height:15px;color:#000;transform:scaleX(0.95);transform-origin:7.4px 0;">0</div>
<div class="a" style="left:1349.1px;top:687.6px;font-size:13.33px;line-height:15px;color:#000;transform:scaleX(0.95);transform-origin:7.4px 0;">0</div>
<div class="a" style="left:45.9px;top:704.6px;font-size:13.33px;line-height:15px;color:#000;font-weight:bold;">Q1</div>
<div class="a" style="left:147.7px;top:704.6px;font-size:13.33px;line-height:15px;color:#000;transform:scaleX(0.95);transform-origin:77.8px 0;">90.40234468</div>
<div class="a" style="left:344.1px;top:704.6px;font-size:13.33px;line-height:15px;color:#000;transform:scaleX(0.95);transform-origin:7.4px 0;">0</div>
<div class="a" style="left:361.7px;top:704.6px;font-size:13.33px;line-height:15px;color:#000;transform:scaleX(0.95);transform-origin:77.8px 0;">0.030188179</div>
<div class="a" style="left:582.1px;top:704.6px;font-size:13.33px;line-height:15px;color:#000;transform:scaleX(0.95);transform-origin:7.4px 0;">0</div>
<div class="a" style="left:599.7px;top:704.6px;font-size:13.33px;line-height:15px;color:#000;transform:scaleX(0.95);transform-origin:77.8px 0;">33.59362881</div>
<div class="a" style="left:758.1px;top:704.6px;font-size:13.33px;line-height:15px;color:#000;transform:scaleX(0.95);transform-origin:7.4px 0;">0</div>
<div class="a" style="left:909.1px;top:704.6px;font-size:13.33px;line-height:15px;color:#000;transform:scaleX(0.95);transform-origin:7.4px 0;">0</div>
<div class="a" style="left:997.1px;top:704.6px;font-size:13.33px;line-height:15px;color:#000;transform:scaleX(0.95);transform-origin:7.4px 0;">0</div>
<div class="a" style="left:1014.7px;top:704.6px;font-size:13.33px;line-height:15px;color:#000;transform:scaleX(0.95);transform-origin:77.8px 0;">82.08358486</div>
<div class="a" style="left:1173.1px;top:704.6px;font-size:13.33px;line-height:15px;color:#000;transform:scaleX(0.95);transform-origin:7.4px 0;">0</div>
<div class="a" style="left:1261.1px;top:704.6px;font-size:13.33px;line-height:15px;color:#000;transform:scaleX(0.95);transform-origin:7.4px 0;">0</div>
<div class="a" style="left:1349.1px;top:704.6px;font-size:13.33px;line-height:15px;color:#000;transform:scaleX(0.95);transform-origin:7.4px 0;">0</div>
<div class="a" style="left:45.9px;top:721.6px;font-size:13.33px;line-height:15px;color:#000;font-weight:bold;">Q3</div>
<div class="a" style="left:148.7px;top:721.6px;font-size:13.33px;line-height:15px;color:#000;transform:scaleX(0.95);transform-origin:76.8px 0;">99.91199367</div>
<div class="a" style="left:281.1px;top:721.6px;font-size:13.33px;line-height:15px;color:#000;transform:scaleX(0.95);transform-origin:70.4px 0;">4.72303897</div>
<div class="a" style="left:369.1px;top:721.6px;font-size:13.33px;line-height:15px;color:#000;transform:scaleX(0.95);transform-origin:70.4px 0;">5.20969278</div>
<div class="a" style="left:511.7px;top:721.6px;font-size:13.33px;line-height:15px;color:#000;transform:scaleX(0.95);transform-origin:77.8px 0;">1.743509404</div>
<div class="a" style="left:599.7px;top:721.6px;font-size:13.33px;line-height:15px;color:#000;transform:scaleX(0.95);transform-origin:77.8px 0;">97.46871457</div>
<div class="a" style="left:688.7px;top:721.6px;font-size:13.33px;line-height:15px;color:#000;transform:scaleX(0.95);transform-origin:76.8px 0;">5.221136889</div>
<div class="a" style="left:838.7px;top:721.6px;font-size:13.33px;line-height:15px;color:#000;transform:scaleX(0.95);transform-origin:77.8px 0;">8.506087409</div>
<div class="a" style="left:926.7px;top:721.6px;font-size:13.33px;line-height:15px;color:#000;transform:scaleX(0.95);transform-origin:77.8px 0;">4.180627978</div>
<div class="a" style="left:1014.7px;top:721.6px;font-size:13.33px;line-height:15px;color:#000;transform:scaleX(0.95);transform-origin:77.8px 0;">99.84155768</div>
<div class="a" style="left:1110.1px;top:721.6px;font-size:13.33px;line-height:15px;color:#000;transform:scaleX(0.95);transform-origin:70.4px 0;">2.99188065</div>
<div class="a" style="left:1190.7px;top:721.6px;font-size:13.33px;line-height:15px;color:#000;transform:scaleX(0.95);transform-origin:77.8px 0;">1.495409344</div>
<div class="a" style="left:1278.7px;top:721.6px;font-size:13.33px;line-height:15px;color:#000;transform:scaleX(0.95);transform-origin:77.8px 0;">0.024197084</div>
<div class="a" style="left:41.8px;top:738.6px;font-size:13.33px;line-height:15px;color:#000;font-weight:bold;">Max</div>
<div class="a" style="left:203.3px;top:738.6px;font-size:13.33px;line-height:15px;color:#000;transform:scaleX(0.95);transform-origin:22.2px 0;">100</div>
<div class="a" style="left:273.7px;top:738.6px;font-size:13.33px;line-height:15px;color:#000;transform:scaleX(0.95);transform-origin:77.8px 0;">37.42696287</div>
<div class="a" style="left:362.7px;top:738.6px;font-size:13.33px;line-height:15px;color:#000;transform:scaleX(0.95);transform-origin:76.8px 0;">33.53911377</div>
<div class="a" style="left:511.7px;top:738.6px;font-size:13.33px;line-height:15px;color:#000;transform:scaleX(0.95);transform-origin:77.8px 0;">30.36979308</div>
<div class="a" style="left:655.3px;top:738.6px;font-size:13.33px;line-height:15px;color:#000;transform:scaleX(0.95);transform-origin:22.2px 0;">100</div>
<div class="a" style="left:687.7px;top:738.6px;font-size:13.33px;line-height:15px;color:#000;transform:scaleX(0.95);transform-origin:77.8px 0;">42.16438068</div>
<div class="a" style="left:838.7px;top:738.6px;font-size:13.33px;line-height:15px;color:#000;transform:scaleX(0.95);transform-origin:77.8px 0;">51.21598167</div>
<div class="a" style="left:926.7px;top:738.6px;font-size:13.33px;line-height:15px;color:#000;transform:scaleX(0.95);transform-origin:77.8px 0;">40.51813242</div>
<div class="a" style="left:1070.3px;top:738.6px;font-size:13.33px;line-height:15px;color:#000;transform:scaleX(0.95);transform-origin:22.2px 0;">100</div>
<div class="a" style="left:1102.7px;top:738.6px;font-size:13.33px;line-height:15px;color:#000;transform:scaleX(0.95);transform-origin:77.8px 0;">34.27978009</div>
<div class="a" style="left:1190.7px;top:738.6px;font-size:13.33px;line-height:15px;color:#000;transform:scaleX(0.95);transform-origin:77.8px 0;">19.83580681</div>
<div class="a" style="left:1278.7px;top:738.6px;font-size:13.33px;line-height:15px;color:#000;transform:scaleX(0.95);transform-origin:77.8px 0;">6.362160532</div>
<div class="a" style="left:37.8px;top:755.6px;font-size:13.33px;line-height:15px;color:#000;font-weight:bold;">Mean</div>
<div class="a" style="left:147.7px;top:755.6px;font-size:13.33px;line-height:15px;color:#000;transform:scaleX(0.95);transform-origin:77.8px 0;">90.48615904</div>
<div class="a" style="left:273.7px;top:755.6px;font-size:13.33px;line-height:15px;color:#000;transform:scaleX(0.95);transform-origin:77.8px 0;">3.828971774</div>
<div class="a" style="left:361.7px;top:755.6px;font-size:13.33px;line-height:15px;color:#000;transform:scaleX(0.95);transform-origin:77.8px 0;">4.376526986</div>
<div class="a" style="left:511.7px;top:755.6px;font-size:13.33px;line-height:15px;color:#000;transform:scaleX(0.95);transform-origin:77.8px 0;">1.834552446</div>
<div class="a" style="left:599.7px;top:755.6px;font-size:13.33px;line-height:15px;color:#000;transform:scaleX(0.95);transform-origin:77.8px 0;">62.62483829</div>
<div class="a" style="left:687.7px;top:755.6px;font-size:13.33px;line-height:15px;color:#000;transform:scaleX(0.95);transform-origin:77.8px 0;">4.493879145</div>
<div class="a" style="left:838.7px;top:755.6px;font-size:13.33px;line-height:15px;color:#000;transform:scaleX(0.95);transform-origin:77.8px 0;">6.723431378</div>
<div class="a" style="left:926.7px;top:755.6px;font-size:13.33px;line-height:15px;color:#000;transform:scaleX(0.95);transform-origin:77.8px 0;">3.153156349</div>
<div class="a" style="left:1014.7px;top:755.6px;font-size:13.33px;line-height:15px;color:#000;transform:scaleX(0.95);transform-origin:77.8px 0;">77.79681669</div>
<div class="a" style="left:1102.7px;top:755.6px;font-size:13.33px;line-height:15px;color:#000;transform:scaleX(0.95);transform-origin:77.8px 0;">2.696346312</div>
<div class="a" style="left:1190.7px;top:755.6px;font-size:13.33px;line-height:15px;color:#000;transform:scaleX(0.95);transform-origin:77.8px 0;">1.412147473</div>
<div class="a" style="left:1278.7px;top:755.6px;font-size:13.33px;line-height:15px;color:#000;transform:scaleX(0.95);transform-origin:77.8px 0;">0.254313935</div>
<div class="a" style="left:31.8px;top:772.6px;font-size:13.33px;line-height:15px;color:#000;font-weight:bold;">Median</div>
<div class="a" style="left:147.7px;top:772.6px;font-size:13.33px;line-height:15px;color:#000;transform:scaleX(0.95);transform-origin:77.8px 0;">97.54330899</div>
<div class="a" style="left:281.1px;top:772.6px;font-size:13.33px;line-height:15px;color:#000;transform:scaleX(0.95);transform-origin:70.4px 0;">0.46703865</div>
<div class="a" style="left:361.7px;top:772.6px;font-size:13.33px;line-height:15px;color:#000;transform:scaleX(0.95);transform-origin:77.8px 0;">0.825340338</div>
<div class="a" style="left:582.1px;top:772.6px;font-size:13.33px;line-height:15px;color:#000;transform:scaleX(0.95);transform-origin:7.4px 0;">0</div>
<div class="a" style="left:599.7px;top:772.6px;font-size:13.33px;line-height:15px;color:#000;transform:scaleX(0.95);transform-origin:77.8px 0;">79.93664283</div>
<div class="a" style="left:687.7px;top:772.6px;font-size:13.33px;line-height:15px;color:#000;transform:scaleX(0.95);transform-origin:77.8px 0;">0.356440261</div>
<div class="a" style="left:838.7px;top:772.6px;font-size:13.33px;line-height:15px;color:#000;transform:scaleX(0.95);transform-origin:77.8px 0;">0.856712639</div>
<div class="a" style="left:997.1px;top:772.6px;font-size:13.33px;line-height:15px;color:#000;transform:scaleX(0.95);transform-origin:7.4px 0;">0</div>
<div class="a" style="left:1014.7px;top:772.6px;font-size:13.33px;line-height:15px;color:#000;transform:scaleX(0.95);transform-origin:77.8px 0;">96.97988603</div>
<div class="a" style="left:1102.7px;top:772.6px;font-size:13.33px;line-height:15px;color:#000;transform:scaleX(0.95);transform-origin:77.8px 0;">0.090513289</div>
<div class="a" style="left:1190.7px;top:772.6px;font-size:13.33px;line-height:15px;color:#000;transform:scaleX(0.95);transform-origin:77.8px 0;">0.077684781</div>
<div class="a" style="left:1349.1px;top:772.6px;font-size:13.33px;line-height:15px;color:#000;transform:scaleX(0.95);transform-origin:7.4px 0;">0</div>
<div class="a" style="left:41.5px;top:789.6px;font-size:13.33px;line-height:15px;color:#000;font-weight:bold;">STD</div>
<div class="a" style="left:147.7px;top:789.6px;font-size:13.33px;line-height:15px;color:#000;transform:scaleX(0.95);transform-origin:77.8px 0;">16.20093843</div>
<div class="a" style="left:273.7px;top:789.6px;font-size:13.33px;line-height:15px;color:#000;transform:scaleX(0.95);transform-origin:77.8px 0;">6.938004108</div>
<div class="a" style="left:361.7px;top:789.6px;font-size:13.33px;line-height:15px;color:#000;transform:scaleX(0.95);transform-origin:77.8px 0;">7.153316437</div>
<div class="a" style="left:511.7px;top:789.6px;font-size:13.33px;line-height:15px;color:#000;transform:scaleX(0.95);transform-origin:77.8px 0;">3.859155778</div>
<div class="a" style="left:599.7px;top:789.6px;font-size:13.33px;line-height:15px;color:#000;transform:scaleX(0.95);transform-origin:77.8px 0;">39.15270454</div>
<div class="a" style="left:687.7px;top:789.6px;font-size:13.33px;line-height:15px;color:#000;transform:scaleX(0.95);transform-origin:77.8px 0;">8.020081554</div>
<div class="a" style="left:839.7px;top:789.6px;font-size:13.33px;line-height:15px;color:#000;transform:scaleX(0.95);transform-origin:76.8px 0;">11.00657858</div>
<div class="a" style="left:926.7px;top:789.6px;font-size:13.33px;line-height:15px;color:#000;transform:scaleX(0.95);transform-origin:77.8px 0;">6.192109386</div>
<div class="a" style="left:1014.7px;top:789.6px;font-size:13.33px;line-height:15px;color:#000;transform:scaleX(0.95);transform-origin:77.8px 0;">37.06025445</div>
<div class="a" style="left:1102.7px;top:789.6px;font-size:13.33px;line-height:15px;color:#000;transform:scaleX(0.95);transform-origin:77.8px 0;">5.258171372</div>
<div class="a" style="left:1190.7px;top:789.6px;font-size:13.33px;line-height:15px;color:#000;transform:scaleX(0.95);transform-origin:77.8px 0;">3.003691305</div>
<div class="a" style="left:1278.7px;top:789.6px;font-size:13.33px;line-height:15px;color:#000;transform:scaleX(0.95);transform-origin:77.8px 0;">0.792838702</div>
<div class="a" style="left:43.0px;top:806.6px;font-size:13.33px;line-height:15px;color:#000;font-weight:bold;">IQR</div>
<div class="a" style="left:155.1px;top:806.6px;font-size:13.33px;line-height:15px;color:#000;transform:scaleX(0.95);transform-origin:70.4px 0;">9.50964899</div>
<div class="a" style="left:281.1px;top:806.6px;font-size:13.33px;line-height:15px;color:#000;transform:scaleX(0.95);transform-origin:70.4px 0;">4.72303897</div>
<div class="a" style="left:361.7px;top:806.6px;font-size:13.33px;line-height:15px;color:#000;transform:scaleX(0.95);transform-origin:77.8px 0;">5.179504601</div>
<div class="a" style="left:511.7px;top:806.6px;font-size:13.33px;line-height:15px;color:#000;transform:scaleX(0.95);transform-origin:77.8px 0;">1.743509404</div>
<div class="a" style="left:599.7px;top:806.6px;font-size:13.33px;line-height:15px;color:#000;transform:scaleX(0.95);transform-origin:77.8px 0;">63.87508576</div>
<div class="a" style="left:688.7px;top:806.6px;font-size:13.33px;line-height:15px;color:#000;transform:scaleX(0.95);transform-origin:76.8px 0;">5.221136889</div>
<div class="a" style="left:838.7px;top:806.6px;font-size:13.33px;line-height:15px;color:#000;transform:scaleX(0.95);transform-origin:77.8px 0;">8.506087409</div>
<div class="a" style="left:926.7px;top:806.6px;font-size:13.33px;line-height:15px;color:#000;transform:scaleX(0.95);transform-origin:77.8px 0;">4.180627978</div>
<div class="a" style="left:1014.7px;top:806.6px;font-size:13.33px;line-height:15px;color:#000;transform:scaleX(0.95);transform-origin:77.8px 0;">17.75797282</div>
<div class="a" style="left:1110.1px;top:806.6px;font-size:13.33px;line-height:15px;color:#000;transform:scaleX(0.95);transform-origin:70.4px 0;">2.99188065</div>
<div class="a" style="left:1190.7px;top:806.6px;font-size:13.33px;line-height:15px;color:#000;transform:scaleX(0.95);transform-origin:77.8px 0;">1.495409344</div>
<div class="a" style="left:1278.7px;top:806.6px;font-size:13.33px;line-height:15px;color:#000;transform:scaleX(0.95);transform-origin:77.8px 0;">0.024197084</div>
<div class="a" style="left:9px;top:217px;width:91px;height:24px;border:2px solid #107C41"></div>
<div class="a" style="left:95px;top:236px;width:7px;height:7px;background:#fff"></div>
<div class="a" style="left:96px;top:237px;width:5px;height:5px;background:#107C41"></div><div class="a" style="left:0;top:958px;width:1884px;height:35px;background:#fff"></div>
<div class="a" style="left:98px;top:957px;width:1px;height:4px;background:#E1E1E1"></div>
<div class="a" style="left:10px;top:957px;width:108px;height:1px;background:#E1E1E1"></div>
<div class="a" style="left:1675px;top:957px;width:209px;height:1px;background:#E1E1E1"></div>
<div class="a" style="left:1711px;top:957px;width:1px;height:4px;background:#E1E1E1"></div>
<div class="a" style="left:1799px;top:957px;width:1px;height:4px;background:#E1E1E1"></div>
<div class="a" style="left:0;top:958px;width:10px;height:3px;background:#F0F0F0"></div>
<div class="a" style="left:-10px;top:961px;width:181px;height:32px;background:#EBE8E7;border-top-right-radius:6px"></div>
<div class="a" style="left:307px;top:961px;width:1597px;height:32px;background:#EBE8E7;border-top-left-radius:6px"></div>
<div class="a" style="left:160px;top:985px;width:160px;height:8px;background:#EBE8E7"></div>
<div class="a" style="left:171px;top:955px;width:136px;height:34px;background:#fff;border-radius:0 0 6px 6px"></div>
<div class="a" style="left:0;top:992px;width:1904px;height:1px;background:#DADADA"></div>
<svg style="left:12px;top:969px" width="10" height="14" viewBox="0 0 10 14" ><path d="M7 1L2 6.5L7 12" fill="none" stroke="#9A9A9A" stroke-width="1.1"/></svg>
<svg style="left:44px;top:969px" width="10" height="14" viewBox="0 0 10 14" ><path d="M2 1L7 6.5L2 12" fill="none" stroke="#9A9A9A" stroke-width="1.1"/></svg>
<div class="a" style="left:110.3px;top:968.8px;font-size:13px;line-height:16px;color:#333;">Sheet1</div>
<div class="a" style="left:166px;top:968px;width:1px;height:17px;background:#C4C4C4"></div>
<div class="a" style="left:179.0px;top:966.4px;font-size:13px;line-height:16px;color:#1a1a1a;font-weight:bold;transform:scaleX(1.0883);transform-origin:0 0;">Globa 2020 report</div>
<div class="a" style="left:179px;top:984px;width:120px;height:2px;background:#107C41"></div>
<div class="a" style="left:311px;top:968px;width:1px;height:17px;background:#C4C4C4"></div>
<svg style="left:353px;top:971px" width="12" height="12" viewBox="0 0 12 12" ><path d="M6 0V11M0.5 5.5H11.5" stroke="#444" stroke-width="1.1"/></svg>
<div class="a" style="left:1138px;top:971px;width:3px;height:3px;background:#444;border-radius:2px"></div>
<div class="a" style="left:1138px;top:976px;width:3px;height:3px;background:#444;border-radius:2px"></div>
<div class="a" style="left:1138px;top:981px;width:3px;height:3px;background:#444;border-radius:2px"></div>
<div class="a" style="left:1157px;top:969px;width:728px;height:15px;background:#F7F7F7;border-radius:8px"></div>
<svg style="left:1161px;top:972px" width="8" height="10" viewBox="0 0 8 10" ><path d="M7 0.5V9L1 4.8Z" fill="#555"/></svg>
<svg style="left:1873px;top:972px" width="8" height="10" viewBox="0 0 8 10" ><path d="M1 0.5V9L7 4.8Z" fill="#555"/></svg>
<div class="a" style="left:1172px;top:972px;width:499px;height:9px;background:#737373;border-radius:5px"></div>
<div class="a" style="left:0;top:993px;width:1904px;height:22px;background:#F3F3F3;border-top:1px solid #E0E0E0"></div>
<div class="a" style="left:0.0px;top:997.6px;font-size:11.5px;line-height:14px;color:#333;transform:scaleX(0.8423);transform-origin:0 0;">Ready</div>
<svg style="left:47px;top:996px" width="16" height="15" viewBox="0 0 16 15" ><rect x="1" y="1" width="13" height="11" fill="none" stroke="#444"/><path d="M1 4H14" stroke="#444"/><circle cx="9.5" cy="8.5" r="2.5" fill="none" stroke="#444"/><path d="M3 6.5H6M3 9H6" stroke="#444"/></svg>
<svg style="left:79px;top:996px" width="16" height="15" viewBox="0 0 16 15" ><circle cx="7.5" cy="2.5" r="1.8" fill="none" stroke="#444"/><path d="M2 5.5H13M7.5 5.5V9L4 14M7.5 9L11 14" fill="none" stroke="#444"/><path d="M9 9L14 14M14 9L9 14" stroke="#444"/></svg>
<div class="a" style="left:97.0px;top:997.6px;font-size:11.5px;line-height:14px;color:#222;transform:scaleX(1.0109);transform-origin:0 0;">Accessibility: Investigate</div>
<div class="a" style="left:1605px;top:993px;width:40px;height:22px;background:#DCDCDC"></div>
<svg style="left:1617px;top:997px" width="16" height="14" viewBox="0 0 16 14" ><rect x="0.5" y="0.5" width="14" height="12" fill="none" stroke="#444"/><path d="M5 0.5V12.5M10 0.5V12.5M0.5 4.5H14.5M0.5 8.5H14.5" stroke="#444"/></svg>
<svg style="left:1657px;top:997px" width="16" height="14" viewBox="0 0 16 14" ><rect x="0.5" y="0.5" width="14" height="12" fill="none" stroke="#444"/><rect x="3" y="3" width="9" height="7" fill="none" stroke="#444"/><path d="M5 5H10M5 7.5H10" stroke="#444"/></svg>
<svg style="left:1697px;top:997px" width="16" height="14" viewBox="0 0 16 14" ><path d="M0.5 12.5V0.5H14.5V12.5" fill="none" stroke="#444"/><path d="M0.5 12.5H6M9 12.5H14.5M7.5 0.5V9" stroke="#444"/></svg>
<div class="a" style="left:1729px;top:1003px;width:9px;height:1px;background:#444"></div>
<div class="a" style="left:1745px;top:1003px;width:99px;height:1px;background:#777"></div>
<div class="a" style="left:1792px;top:997px;width:4px;height:12px;background:#555"></div>
<svg style="left:1847px;top:997px" width="11" height="11" viewBox="0 0 11 11" ><path d="M5.5 0.5V10.5M0.5 5.5H10.5" stroke="#444"/></svg>
<div class="a" style="left:1869.0px;top:997.6px;font-size:11.5px;line-height:14px;color:#333;transform:scaleX(1.0200);transform-origin:0 0;">100%</div>
<svg style="left:0;top:0" width="1904" height="1015" viewBox="0 0 1904 1015"><g opacity="0.085"><g fill="none" stroke="#000" stroke-width="7" stroke-linecap="butt">
<path d="M841.7 962V979C841.7 985 845 987 851 987H880C886 987 889 985 889 979V962"/>
<path d="M899.5 949V987"/>
<path d="M896 988.5H990"/>
<path d="M930.5 962V988"/>
<path d="M967.5 962V988"/>
<path d="M1000 964C1009 964 1012 970 1012 977C1012 986 1007 989 999 989C991 989 988 984 988 977C988 970 992 964 1000 964Z"/>
<path d="M1028 969C1046 965 1061 968 1061 980V993"/>
</g>
<g fill="#000">
<path d="M859 950.5L863.5 955L859 959.5L854.5 955Z"/><path d="M874 950.5L878.5 955L874 959.5L869.5 955Z"/>
<path d="M1043.3 949.5L1048 954.4L1043.3 959.3L1038.6 954.4Z"/>
<rect x="981" y="949" width="13.5" height="7"/><rect x="997" y="949" width="14" height="7"/><rect x="981" y="949" width="7" height="28"/>
</g></g></svg>
<div class="a" style="left:1884px;top:195px;width:20px;height:798px;background:#EBE8E7"></div>
<div class="a" style="left:1886px;top:202px;width:17px;height:762px;background:#F5F5F5;border-radius:8px"></div>
<svg style="left:1888px;top:205px" width="13" height="11" viewBox="0 0 13 11" ><path d="M2 9L6.5 2L11 9Z" fill="#6E6E6E" stroke="#6E6E6E" stroke-width="0.8" stroke-linejoin="round"/></svg>
<svg style="left:1888px;top:950px" width="13" height="11" viewBox="0 0 13 11" ><path d="M2 2H11L6.5 9Z" fill="#6E6E6E" stroke="#6E6E6E" stroke-width="0.8" stroke-linejoin="round"/></svg>
<div class="a" style="left:1890px;top:219px;width:9px;height:313px;background:#707070;border-radius:5px"></div>
</body></html>
